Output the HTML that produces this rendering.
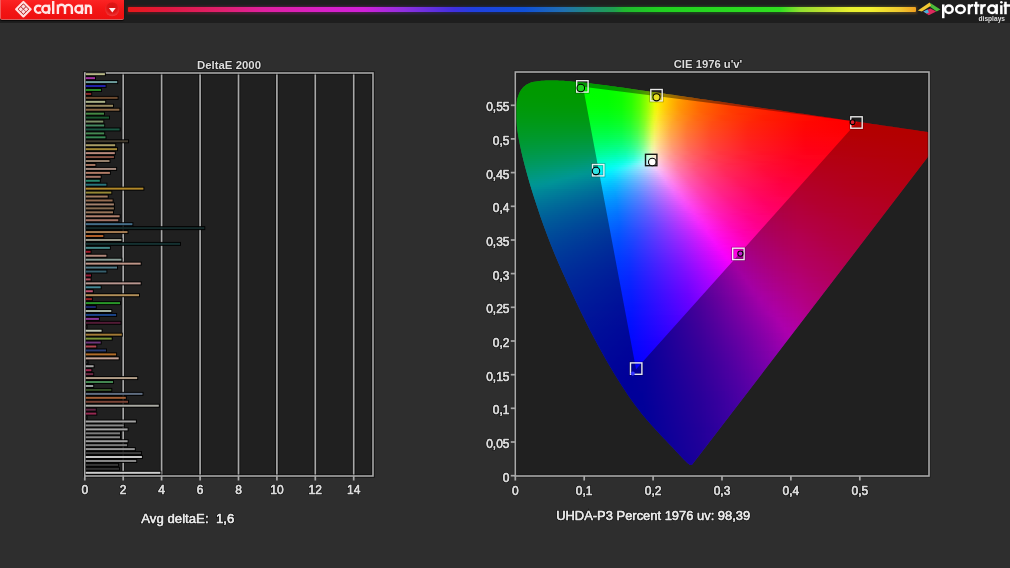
<!DOCTYPE html><html><head><meta charset="utf-8"><style>
*{margin:0;padding:0}
html,body{width:1010px;height:568px;overflow:hidden;background:#2e2e2e}
body{position:relative;font-family:"Liberation Sans",sans-serif}
#top{position:absolute;left:0;top:0;width:1010px;height:23px;background:#1e1e1e}
#rb{position:absolute;left:128px;top:7px;width:788px;height:5px;border-radius:1px;background:linear-gradient(90deg,#e81818 0,#e01840 40px,#e02070 96px,#e020a0 136px,#d820c8 196px,#d020d8 236px,#9030e0 276px,#7030e0 296px,#4030e0 326px,#2040e0 346px,#1050d8 396px,#2070b0 436px,#209070 466px,#20a050 486px,#20b830 496px,#20d020 532px,#30e020 652px,#90e030 672px,#c0e030 696px,#e8f030 722px,#f0f030 742px,#f0c830 772px,#f0a020 788px)}
#rbg{position:absolute;left:127px;top:5.5px;width:790px;height:8px;filter:blur(1.2px);opacity:.22;background:linear-gradient(90deg,#e81818 0,#e01840 40px,#e02070 96px,#e020a0 136px,#d820c8 196px,#d020d8 236px,#9030e0 276px,#7030e0 296px,#4030e0 326px,#2040e0 346px,#1050d8 396px,#2070b0 436px,#209070 466px,#20a050 486px,#20b830 496px,#20d020 532px,#30e020 652px,#90e030 672px,#c0e030 696px,#e8f030 722px,#f0f030 742px,#f0c830 772px,#f0a020 788px)}
#btn{position:absolute;left:0;top:-4px;width:123px;height:23px;border-radius:0 0 2px 2px;border-left:1px solid #f25a5a;border-bottom:1px solid #d66060;background:linear-gradient(180deg,#ff2a2a 0,#f41616 55%,#ee1010 100%);box-shadow:0 1px 1px rgba(0,0,0,.7)}
#wrap{position:absolute;left:0;top:0;width:1010px;height:568px;overflow:hidden;filter:blur(.35px)}
#logo{position:absolute;left:0;top:0;will-change:transform}
#cie{position:absolute;overflow:hidden}
#cie i{position:absolute;left:0;width:100%;display:block}
#ov{position:absolute;left:0;top:0;will-change:transform}
text{font-family:"Liberation Sans",sans-serif;fill:#dcdcdc}
.ax{font-size:12px;paint-order:stroke;stroke:#000;stroke-opacity:.5;stroke-width:2px}
.axf{font-size:12px;stroke:#dcdcdc;stroke-width:.5px}
.tt{font-size:10.5px;font-weight:bold;paint-order:stroke;stroke:#000;stroke-opacity:.45;stroke-width:1.6px}
.big{font-size:13.2px;paint-order:stroke;stroke:#000;stroke-opacity:.5;stroke-width:2px}
.bigf{font-size:13.2px;stroke:#e8e8e8;stroke-width:.45px;fill:#e8e8e8}
</style></head><body><div id="wrap">
<div id="top"></div>
<div id="rbg"></div><div id="rb"></div>
<div id="btn"></div>
<svg id="logo" width="1010" height="24" viewBox="0 0 1010 24">
  <g transform="translate(23.4 9.2)">
    <path d="M0 -7.2 L7.2 0 L0 7.2 L-7.2 0 Z" fill="none" stroke="#ffe0e0" stroke-width="2.3" stroke-linejoin="round"/>
    <path d="M0 -5.6 L5.6 0 L0 5.6 L-5.6 0 Z" fill="#a01212"/>
    <path d="M0 -4.9 L2.25 -2.65 L0 -0.4 L-2.25 -2.65 Z M2.65 -2.25 L4.9 0 L2.65 2.25 L0.4 0 Z M0 0.4 L2.25 2.65 L0 4.9 L-2.25 2.65 Z M-2.65 -2.25 L-0.4 0 L-2.65 2.25 L-4.9 0 Z" fill="#ffdce0"/>
  </g>
  <g fill="none" stroke="#ffe6e6" stroke-width="2.4">
    <path d="M41.0 6.6 A3.6 3.6 0 1 0 41.0 11.8"/>
    <circle cx="45.9" cy="9.2" r="3.55"/>
    <path d="M49.0 4.6 V14"/>
    <path d="M53.2 1 V14"/>
    <path d="M57.9 14 V4.6 M57.9 8.3 A3.55 3.55 0 0 1 65 8.3 V14 M65 8.3 A3.45 3.45 0 0 1 71.9 8.3 V14"/>
    <circle cx="78.9" cy="9.2" r="3.55"/>
    <path d="M81.9 4.6 V14"/>
    <path d="M85.9 14 V4.6 M85.9 8.4 A2.5 2.6 0 0 1 90.9 8.4 V14"/>
  </g>
  <circle cx="112.2" cy="9.2" r="7" fill="url(#cg)"/>
  <defs><radialGradient id="cg" cx=".5" cy=".4" r=".6"><stop offset="0" stop-color="#d81010"/><stop offset=".6" stop-color="#e01616"/><stop offset="1" stop-color="#f23a3a"/></radialGradient></defs>
  <path d="M108.9 8.0 L115.7 8.0 L112.3 12.4 Z" fill="#fff0f0"/>
  <g>
    <path d="M917.8 10.4 L929.6 2.6 L931.4 5.4 L929.8 6.6 L921.8 11.6 Z" fill="#f2c832"/>
    <path d="M929.6 2.6 L940.4 9.4 L936.6 11.4 L929.8 6.6 L931.4 5.4 Z" fill="#4cbc3a"/>
    <path d="M923.4 11.4 L930.4 8.4 L936.2 11.6 L928.8 15.2 Z" fill="#dc2a5c"/>
    <path d="M923.4 11.4 L927.6 9.6 L929.0 12.6 L926.4 13.5 Z" fill="#44b4dc"/>
  </g>
  <g fill="none" stroke="#ffffff" stroke-width="2.5">
    <path d="M943.25 4.4 V18.2"/>
    <ellipse cx="948.9" cy="9.2" rx="3.8" ry="3.75"/>
    <ellipse cx="960.45" cy="9.2" rx="4.3" ry="3.75"/>
    <path d="M968.95 14.2 V4.2 M968.95 8.8 A4.2 4.2 0 0 1 973.4 5.3"/>
    <path d="M976.2 1.7 V14.2 M974 5.4 H979.4"/>
    <path d="M981.45 14.2 V4.2 M981.45 8.8 A4.2 4.2 0 0 1 985.8 5.3"/>
    <ellipse cx="992.1" cy="9.2" rx="3.8" ry="3.75"/>
    <path d="M996.65 4.2 V14.2"/>
    <path d="M1001.35 5.2 V14.2"/>
    <path d="M1005.5 1.7 V14.2 M1003.6 5.4 H1010"/>
  </g>
  <circle cx="1001.35" cy="2.2" r="1.3" fill="#fff"/>
  <text x="978.5" y="20.8" font-size="6.8" font-weight="bold" fill="#d8d8d8" textLength="26.5" lengthAdjust="spacingAndGlyphs" style="font-family:'Liberation Sans',sans-serif">displays</text>
</svg>
<div id="cie" style="left:516px;top:73px;width:413px;height:403px"><i style="top:0px;height:2px;background:linear-gradient(90deg,#00ff00 0,#02ff00 91.5px,#11ff00 105.5px,#31ff00 116.5px,#60ff00 125.5px,#97ff00 132.5px,#edfa00 141.5px,#fdec00 145.5px,#ffb000 160.5px,#ff7d00 180.5px,#ff5200 207.5px,#ff2b00 248.5px,#ff0b00 312.5px,#ff0000 358.5px,#ff0000 409.5px,#ff0000 413px)"></i><i style="top:2px;height:2px;background:linear-gradient(90deg,#00ff00 0,#02ff00 91.5px,#11ff00 105.5px,#31ff00 116.5px,#60ff00 125.5px,#97ff00 132.5px,#e7fb00 140.5px,#f8f300 143.5px,#ffd500 150.5px,#ff9e00 166.5px,#ff6d00 188.5px,#ff4200 221.5px,#ff1c00 272.5px,#ff0100 344.5px,#ff0000 408.5px,#ff0000 413px)"></i><i style="top:4px;height:2px;background:linear-gradient(90deg,#00ff00 0,#02ff00 91.5px,#10ff00 105.5px,#30ff00 116.5px,#60ff00 125.5px,#98ff00 132.5px,#e8fb00 140.5px,#f9f300 143.5px,#ffd400 150.5px,#ff9d00 166.5px,#ff6c00 188.5px,#ff4100 221.5px,#ff1c00 272.5px,#ff0100 344.5px,#ff0000 408.5px,#ff0000 413px)"></i><i style="top:6px;height:2px;background:linear-gradient(90deg,#00ff00 0,#01ff00 91.5px,#10ff00 105.5px,#30ff00 116.5px,#61ff00 125.5px,#99ff00 132.5px,#e9fb00 140.5px,#fcee00 144.5px,#ffb100 159.5px,#ff8100 177.5px,#ff5400 204.5px,#ff2c00 245.5px,#ff0b00 309.5px,#ff0000 355.5px,#ff0000 413px)"></i><i style="top:8px;height:2px;background:linear-gradient(90deg,#00ff00 0,#01ff00 91.5px,#10ff00 105.5px,#2cff00 115.5px,#5aff00 124.5px,#90ff00 131.5px,#eafa00 140.5px,#fced00 144.5px,#ffb000 159.5px,#ff8000 177.5px,#ff5300 204.5px,#ff2b00 245.5px,#ff0a00 309.5px,#ff0000 355.5px,#ff0000 413px)"></i><i style="top:10px;height:2px;background:linear-gradient(90deg,#00ff00 0,#01ff00 91.5px,#10ff00 105.5px,#2cff00 115.5px,#5aff00 124.5px,#91ff00 131.5px,#ebfa00 140.5px,#fcec00 144.5px,#ffaf00 159.5px,#ff7f00 177.5px,#ff5200 204.5px,#ff2a00 245.5px,#ff0a00 309.5px,#ff0000 355.5px,#ff0000 413px)"></i><i style="top:12px;height:2px;background:linear-gradient(90deg,#00ff00 0,#01ff00 91.5px,#10ff00 105.5px,#2cff00 115.5px,#5bff00 124.5px,#92ff00 131.5px,#ecfa00 140.5px,#fdec00 144.5px,#ffae00 159.5px,#ff7e00 177.5px,#ff5100 204.5px,#ff2a00 245.5px,#ff0900 309.5px,#ff0000 355.5px,#ff0000 413px)"></i><i style="top:14px;height:2px;background:linear-gradient(90deg,#00ff01 0,#01ff00 91.5px,#0fff00 105.5px,#2cff00 115.5px,#54ff00 123.5px,#8aff00 130.5px,#edf900 140.5px,#fdeb00 144.5px,#ffad00 159.5px,#ff7d00 177.5px,#ff5000 204.5px,#ff2900 245.5px,#ff0900 309.5px,#ff0000 350.5px,#ff0000 407.5px,#ff0000 413px)"></i><i style="top:16px;height:2px;background:linear-gradient(90deg,#00ff01 0,#01ff00 91.5px,#0fff00 105.5px,#2cff00 115.5px,#55ff00 123.5px,#8aff00 130.5px,#e6fb00 139.5px,#f8f200 142.5px,#ffd300 149.5px,#ff9d00 164.5px,#ff6f00 184.5px,#ff4400 214.5px,#ff1f00 260.5px,#ff0100 332.5px,#ff0000 404.5px,#ff0000 413px)"></i><i style="top:18px;height:2px;background:linear-gradient(90deg,#00ff02 0,#01ff00 91.5px,#0fff00 105.5px,#2cff00 115.5px,#55ff00 123.5px,#8bff00 130.5px,#e7fb00 139.5px,#f9f200 142.5px,#ffd200 149.5px,#ff9c00 164.5px,#ff6e00 184.5px,#ff4300 214.5px,#ff1e00 260.5px,#ff0100 332.5px,#ff0000 404.5px,#ff0000 413px)"></i><i style="top:20px;height:2px;background:linear-gradient(90deg,#00ff03 0,#01ff00 91.5px,#0fff00 105.5px,#2cff00 115.5px,#55ff00 123.5px,#8cff00 130.5px,#e8fb00 139.5px,#f9f100 142.5px,#ffcd00 150.5px,#ff9800 165.5px,#ff6700 187.5px,#ff3f00 217.5px,#ff1c00 263.5px,#ff0000 335.5px,#ff0000 407.5px,#ff0000 413px)"></i><i style="top:22px;height:2px;background:linear-gradient(90deg,#00ff05 0,#01ff00 91.5px,#0fff00 105.5px,#2cff00 115.5px,#55ff00 123.5px,#8cff00 130.5px,#e9fa00 139.5px,#f9f000 142.5px,#ffc700 151.5px,#ff9200 167.5px,#ff6300 189.5px,#ff3900 222.5px,#ff1600 273.5px,#ff0000 337.5px,#ff0000 409.5px,#ff0000 413px)"></i><i style="top:24px;height:2px;background:linear-gradient(90deg,#00ff06 0,#01ff01 91.5px,#0eff00 105.5px,#2bff00 115.5px,#55ff00 123.5px,#8dff00 130.5px,#eafa00 139.5px,#faf000 142.5px,#ffc200 152.5px,#ff8e00 168.5px,#ff6100 190.5px,#ff3800 223.5px,#ff1500 274.5px,#ff0000 331.5px,#ff0000 413px)"></i><i style="top:26px;height:2px;background:linear-gradient(90deg,#00ff08 0,#01ff02 91.5px,#0eff01 105.5px,#2bff01 115.5px,#55ff00 123.5px,#8eff00 130.5px,#ebf900 139.5px,#faef00 142.5px,#ffbd00 153.5px,#ff8b00 169.5px,#ff5e00 191.5px,#ff3600 224.5px,#ff1400 275.5px,#ff0000 332.5px,#ff0000 404.5px,#ff0000 413px)"></i><i style="top:28px;height:2px;background:linear-gradient(90deg,#00ff0a 0,#01ff03 91.5px,#0eff02 105.5px,#2bff01 115.5px,#56ff01 123.5px,#8fff01 130.5px,#e4fb01 138.5px,#f7f201 141.5px,#ffd601 147.5px,#ffa000 161.5px,#ff6f00 181.5px,#ff4600 208.5px,#ff2200 249.5px,#ff0400 313.5px,#ff0000 377.5px,#ff0000 410.5px,#ff0000 413px)"></i><i style="top:30px;height:2px;background:linear-gradient(90deg,#00ff0c 0,#01ff05 91.5px,#0eff04 105.5px,#2bff03 115.5px,#56ff02 123.5px,#90ff02 130.5px,#e5fb02 138.5px,#f8f203 141.5px,#ffd503 147.5px,#ff9f01 161.5px,#ff6e00 181.5px,#ff4500 208.5px,#ff2100 249.5px,#ff0400 313.5px,#ff0000 404.5px,#ff0000 413px)"></i><i style="top:32px;height:2px;background:linear-gradient(90deg,#00ff0e 0,#01ff07 91.5px,#0eff06 105.5px,#2bff05 115.5px,#56ff04 123.5px,#90ff03 130.5px,#e6fb05 138.5px,#f8f106 141.5px,#ffd005 148.5px,#ff9b02 162.5px,#ff6b01 182.5px,#ff4000 212.5px,#ff1b00 258.5px,#ff0100 322.5px,#ff0000 403.5px,#ff0000 413px)"></i><i style="top:34px;height:2px;background:linear-gradient(90deg,#00ff11 0,#01ff0a 91.5px,#0eff08 105.5px,#2bff07 115.5px,#56ff06 123.5px,#91ff06 130.5px,#e7fa08 138.5px,#f9f00a 141.5px,#ffcf09 148.5px,#ff9a05 162.5px,#ff6a01 182.5px,#ff3f00 212.5px,#ff1b00 258.5px,#ff0000 322.5px,#ff0000 403.5px,#ff0000 413px)"></i><i style="top:36px;height:2px;background:linear-gradient(90deg,#00ff13 0,#01ff0d 91.5px,#0dff0b 105.5px,#2bff0a 115.5px,#57ff09 123.5px,#92ff09 130.5px,#e8fa0c 138.5px,#f9f00f 141.5px,#ffc90d 149.5px,#ff9307 164.5px,#ff6603 184.5px,#ff3c00 214.5px,#ff1900 260.5px,#ff0000 324.5px,#ff0000 405.5px,#ff0000 413px)"></i><i style="top:38px;height:2px;background:linear-gradient(90deg,#00ff16 0,#01ff10 91.5px,#0dff0f 105.5px,#2bff0e 115.5px,#57ff0d 123.5px,#93ff0c 130.5px,#e9f911 138.5px,#faef15 141.5px,#ffc412 150.5px,#ff900b 165.5px,#ff6305 185.5px,#ff3b01 215.5px,#ff1800 261.5px,#ff0100 318.5px,#ff0000 409.5px,#ff0000 413px)"></i><i style="top:40px;height:2px;background:linear-gradient(90deg,#00ff19 0,#01ff14 91.5px,#0dff12 105.5px,#2aff12 115.5px,#57ff11 123.5px,#94ff10 130.5px,#eaf916 138.5px,#faee1b 141.5px,#ffba16 152.5px,#ff870d 168.5px,#ff5a07 190.5px,#ff3202 223.5px,#ff1000 274.5px,#ff0000 325.5px,#ff0000 406.5px,#ff0000 413px)"></i><i style="top:42px;height:2px;background:linear-gradient(90deg,#00ff1c 0,#00ff18 91.5px,#0dff17 105.5px,#2aff16 115.5px,#57ff15 123.5px,#95ff15 130.5px,#e3fb1a 137.5px,#f7f220 140.5px,#ffd420 146.5px,#ff9d16 160.5px,#ff6f0d 178.5px,#ff4406 205.5px,#ff2001 246.5px,#ff0200 310.5px,#ff0000 413px)"></i><i style="top:44px;height:2px;background:linear-gradient(90deg,#00ff1f 0,#00ff1c 91.5px,#0dff1b 105.5px,#26ff1a 114.5px,#50ff1a 122.5px,#8bff19 129.5px,#e4fb20 137.5px,#f8f126 140.5px,#ffd326 146.5px,#ff9c1a 160.5px,#ff6e11 178.5px,#ff4308 205.5px,#ff1f02 246.5px,#ff0100 310.5px,#ff0000 413px)"></i><i style="top:46px;height:2px;background:linear-gradient(90deg,#00ff23 0,#00ff20 91.5px,#0cff20 105.5px,#26ff1f 114.5px,#51ff1f 122.5px,#8cff1f 129.5px,#e5fa27 137.5px,#f8f02d 140.5px,#ffcd2b 147.5px,#ff971e 161.5px,#ff6713 181.5px,#ff3f0a 208.5px,#ff1c03 249.5px,#ff0000 313.5px,#ff0000 404.5px,#ff0000 413px)"></i><i style="top:48px;height:2px;background:linear-gradient(90deg,#00ff26 0,#00ff25 91.5px,#0cff25 105.5px,#26ff25 114.5px,#51ff25 122.5px,#83ff25 128.5px,#ddfc2b 136.5px,#f4f433 139.5px,#fee036 143.5px,#ffa728 156.5px,#ff791c 172.5px,#ff4d11 196.5px,#ff2707 233.5px,#ff0701 290.5px,#ff0000 327.5px,#ff0000 408.5px,#ff0000 413px)"></i><i style="top:50px;height:2px;background:linear-gradient(90deg,#00ff2a 0,#00ff2a 91.5px,#0cff2b 105.5px,#26ff2b 114.5px,#51ff2b 122.5px,#83ff2b 128.5px,#d3fd30 135.5px,#eff738 138.5px,#fde53d 142.5px,#ffaa2e 155.5px,#ff7a20 171.5px,#ff4e14 195.5px,#ff270a 232.5px,#ff0702 289.5px,#ff0000 326.5px,#ff0000 407.5px,#ff0000 413px)"></i><i style="top:52px;height:2px;background:linear-gradient(90deg,#00ff2e 0,#00ff30 91.5px,#0cff30 105.5px,#25ff31 114.5px,#51ff31 122.5px,#84ff31 128.5px,#d5fd37 135.5px,#f0f640 138.5px,#fee445 142.5px,#ffa934 155.5px,#ff7925 171.5px,#ff4d17 195.5px,#ff260c 232.5px,#ff0703 289.5px,#ff0001 326.5px,#ff0000 407.5px,#ff0000 413px)"></i><i style="top:54px;height:2px;background:linear-gradient(90deg,#00ff32 0,#00ff36 91.5px,#0bff37 105.5px,#25ff37 114.5px,#4aff38 121.5px,#7bff38 127.5px,#d6fd3f 135.5px,#f1f547 138.5px,#fee34c 142.5px,#ffa839 155.5px,#ff7829 171.5px,#ff4c1a 195.5px,#ff250e 232.5px,#ff0605 289.5px,#ff0002 326.5px,#ff0000 407.5px,#ff0000 413px)"></i><i style="top:56px;height:2px;background:linear-gradient(90deg,#00ff36 0,#00ff3c 91.5px,#0bff3d 105.5px,#25ff3e 114.5px,#4aff3f 121.5px,#7cff40 127.5px,#d7fc47 135.5px,#f2f550 138.5px,#fee253 142.5px,#ffaa40 154.5px,#ff7a2e 170.5px,#ff4d1e 194.5px,#ff2511 231.5px,#ff0606 288.5px,#ff0003 325.5px,#ff0000 406.5px,#ff0000 413px)"></i><i style="top:58px;height:2px;background:linear-gradient(90deg,#00ff3a 0,#00ff42 91.5px,#0bff44 105.5px,#25ff46 114.5px,#4bff47 121.5px,#7cff48 127.5px,#d9fc50 135.5px,#f2f459 138.5px,#fee15b 142.5px,#ffa946 154.5px,#ff7933 170.5px,#ff4c22 194.5px,#ff2513 231.5px,#ff0508 288.5px,#ff0003 329.5px,#ff0000 410.5px,#ff0000 413px)"></i><i style="top:60px;height:2px;background:linear-gradient(90deg,#00ff3f 0,#00ff49 91.5px,#0bff4c 105.5px,#25ff4d 114.5px,#4bff4f 121.5px,#7dff50 127.5px,#dafc59 135.5px,#f3f362 138.5px,#fee063 142.5px,#ffa84c 154.5px,#ff7738 170.5px,#ff4b25 194.5px,#ff2415 231.5px,#ff0509 288.5px,#ff0004 334.5px,#ff0000 406.5px,#ff0000 413px)"></i><i style="top:62px;height:2px;background:linear-gradient(90deg,#00ff43 0,#00ff50 91.5px,#0bff53 105.5px,#25ff56 114.5px,#4bff58 121.5px,#7eff59 127.5px,#dbfc63 135.5px,#f4f36b 138.5px,#fedf6b 142.5px,#ffa752 154.5px,#ff763c 170.5px,#ff4a28 194.5px,#ff2318 231.5px,#ff040b 288.5px,#ff0004 345.5px,#ff0001 409.5px,#ff0001 413px)"></i><i style="top:64px;height:2px;background:linear-gradient(90deg,#00ff48 0,#00ff57 91.5px,#0aff5b 105.5px,#24ff5e 114.5px,#4bff61 121.5px,#7eff63 127.5px,#ddfb6d 135.5px,#f5f275 138.5px,#fede73 142.5px,#ffa659 154.5px,#ff7541 170.5px,#ff492c 194.5px,#ff231a 231.5px,#ff040d 288.5px,#ff0004 369.5px,#ff0001 410.5px,#ff0001 413px)"></i><i style="top:66px;height:2px;background:linear-gradient(90deg,#00ff4d 0,#00ff5f 91.5px,#0aff64 105.5px,#24ff67 114.5px,#4bff6a 121.5px,#7fff6d 127.5px,#defb77 135.5px,#f5f17e 138.5px,#ffd779 143.5px,#ffa15d 155.5px,#ff7245 171.5px,#ff472f 195.5px,#ff211c 232.5px,#ff030e 289.5px,#ff0002 403.5px,#ff0002 413px)"></i><i style="top:68px;height:2px;background:linear-gradient(90deg,#00ff52 0,#00ff67 91.5px,#0aff6d 105.5px,#24ff71 114.5px,#4bff74 121.5px,#80ff77 127.5px,#dffb82 135.5px,#f6f188 138.5px,#ffd681 143.5px,#ffa063 155.5px,#ff7149 171.5px,#ff4632 195.5px,#ff201f 232.5px,#ff0210 289.5px,#ff0003 403.5px,#ff0003 413px)"></i><i style="top:70px;height:2px;background:linear-gradient(90deg,#00ff57 0,#00ff70 91.5px,#0aff76 105.5px,#24ff7b 114.5px,#4bff7f 121.5px,#81ff82 127.5px,#e0fa8d 135.5px,#f6f092 138.5px,#ffd589 143.5px,#ff9f69 155.5px,#ff704e 171.5px,#ff4536 195.5px,#ff2021 232.5px,#ff0211 289.5px,#ff0004 403.5px,#ff0003 413px)"></i><i style="top:72px;height:2px;background:linear-gradient(90deg,#00ff5d 0,#00ff79 91.5px,#0aff80 105.5px,#24ff85 114.5px,#4bff8a 121.5px,#81ff8e 127.5px,#e2fa99 135.5px,#f7ef9c 138.5px,#ffd492 143.5px,#ff9e70 155.5px,#ff6f53 171.5px,#ff4439 195.5px,#ff1f24 232.5px,#ff0113 289.5px,#ff0005 403.5px,#ff0004 413px)"></i><i style="top:74px;height:2px;background:linear-gradient(90deg,#00ff62 0,#00ff7d 81.5px,#04ff88 101.5px,#18ff8e 111.5px,#38ff93 118.5px,#64ff97 124.5px,#a6ff9d 130.5px,#e3faa5 135.5px,#f8eea7 138.5px,#ffcd96 144.5px,#ff9974 156.5px,#ff6b57 172.5px,#ff423c 196.5px,#ff1d26 233.5px,#ff0115 290.5px,#ff0006 404.5px,#ff0005 413px)"></i><i style="top:76px;height:2px;background:linear-gradient(90deg,#00ff68 0,#00ff86 81.5px,#04ff92 101.5px,#18ff99 111.5px,#38ff9f 118.5px,#65ffa4 124.5px,#a7ffaa 130.5px,#e4f9b1 135.5px,#f8edb2 138.5px,#ffcc9f 144.5px,#ff987a 156.5px,#ff6a5c 172.5px,#ff4140 196.5px,#ff1d28 233.5px,#ff0016 290.5px,#ff0007 404.5px,#ff0006 413px)"></i><i style="top:78px;height:2px;background:linear-gradient(90deg,#00ff6e 0,#00ff8a 72.5px,#02ff9b 99.5px,#12ffa3 109.5px,#32ffaa 117.5px,#5cffb0 123.5px,#9bffb6 129.5px,#e5f9be 135.5px,#f9ecbc 138.5px,#ffc5a3 145.5px,#ff907c 158.5px,#ff615b 176.5px,#ff373e 203.5px,#ff1526 244.5px,#ff0018 290.5px,#ff0008 404.5px,#ff0007 413px)"></i><i style="top:80px;height:2px;background:linear-gradient(90deg,#00ff74 0,#00ff93 72.5px,#02ffa6 99.5px,#11ffaf 109.5px,#32ffb7 117.5px,#5cffbd 123.5px,#90ffc3 128.5px,#e6f8cb 135.5px,#f9ebc7 138.5px,#ffbfa8 146.5px,#ff8b80 159.5px,#ff5e5e 177.5px,#ff3540 204.5px,#ff1328 245.5px,#ff0019 291.5px,#ff0009 405.5px,#ff0008 413px)"></i><i style="top:82px;height:2px;background:linear-gradient(90deg,#00ff7b 0,#00ff9d 72.5px,#02ffb2 99.5px,#11ffbb 109.5px,#32ffc4 117.5px,#5effcb 123.5px,#9fffd3 129.5px,#defad8 134.5px,#f6efd5 137.5px,#ffd3c1 142.5px,#ff9f97 153.5px,#ff6e70 169.5px,#ff4550 191.5px,#ff2135 224.5px,#ff0420 275.5px,#ff000f 356.5px,#ff0009 407.5px,#ff0009 413px)"></i><i style="top:84px;height:2px;background:linear-gradient(90deg,#00ff81 0,#00ffa1 64.5px,#03ffc0 101.5px,#14ffc9 110.5px,#34ffd2 117.5px,#61ffd9 123.5px,#a3fee1 129.5px,#e0f9e5 134.5px,#f6eee0 137.5px,#ffd2cb 142.5px,#ff9e9e 153.5px,#ff6d76 169.5px,#ff4454 191.5px,#ff2038 224.5px,#ff0321 275.5px,#ff000c 389.5px,#ff000a 411.5px,#ff000a 413px)"></i><i style="top:86px;height:2px;background:linear-gradient(90deg,#00ff88 0,#00ffab 64.5px,#04ffcc 101.5px,#16ffd7 110.5px,#39fedf 117.5px,#69fde7 123.5px,#e2f6ef 134.5px,#f6ebea 137.5px,#ffcbcf 143.5px,#ff959f 155.5px,#ff6777 171.5px,#ff3d54 195.5px,#ff1a36 232.5px,#ff0021 283.5px,#ff000d 397.5px,#ff000b 413px)"></i><i style="top:88px;height:2px;background:linear-gradient(90deg,#00ff8f 0,#00ffb5 64.5px,#01ffd4 97.5px,#0efedf 106.5px,#2afde7 113.5px,#5bfcef 120.5px,#e3f1f7 134.5px,#f8e3ef 138.5px,#ffbac9 146.5px,#ff869a 159.5px,#ff5971 177.5px,#ff324e 204.5px,#ff1032 245.5px,#ff0022 286.5px,#ff000d 400.5px,#ff000c 413px)"></i><i style="top:90px;height:2px;background:linear-gradient(90deg,#00ff96 0,#00ffb9 57.5px,#03fee2 98.5px,#15fdeb 106.5px,#38fbf2 113.5px,#85f5f9 123.5px,#e0e9fc 134.5px,#f8dbf2 139.5px,#ffafc9 148.5px,#ff7c98 162.5px,#ff4f6e 182.5px,#ff284a 212.5px,#ff092e 258.5px,#ff0022 291.5px,#ff000e 405.5px,#ff000d 413px)"></i><i style="top:92px;height:2px;background:linear-gradient(90deg,#00ff9d 0,#00ffc3 57.5px,#01fee9 94.5px,#10fbf1 102.5px,#34f8f7 110.5px,#dbe0fe 134.5px,#f7d2f4 140.5px,#ffaed1 148.5px,#ff7ea1 161.5px,#ff5377 179.5px,#ff2e53 206.5px,#ff0e36 247.5px,#ff0026 284.5px,#ff0010 398.5px,#ff000e 413px)"></i><i style="top:94px;height:2px;background:linear-gradient(90deg,#00ffa5 0,#00ffce 57.5px,#02fbf3 94.5px,#14f8f8 101.5px,#46f0fc 111.5px,#ead1fc 138.5px,#fcbeec 144.5px,#ff83ae 159.5px,#ff5680 177.5px,#ff2f59 204.5px,#ff0e39 245.5px,#ff0029 282.5px,#ff0013 384.5px,#ff000f 411.5px,#ff000f 413px)"></i><i style="top:96px;height:2px;background:linear-gradient(90deg,#00ffac 0,#00ffd8 57.5px,#00f9f7 90.5px,#0af4fb 97.5px,#35ecfe 107.5px,#ecc5fc 140.5px,#fdb3ea 146.5px,#ff7bae 161.5px,#ff5181 179.5px,#ff2c5a 206.5px,#ff0c3a 247.5px,#ff002b 280.5px,#ff0014 382.5px,#ff0010 413px)"></i><i style="top:98px;height:2px;background:linear-gradient(90deg,#00ffb4 0,#00ffe3 57.5px,#00f5fb 87.5px,#06effd 95.5px,#28e6ff 104.5px,#c5c5ff 134.5px,#f2b8f9 143.5px,#fea1e0 150.5px,#ff72ab 164.5px,#ff4b81 182.5px,#ff285b 209.5px,#ff0a3b 250.5px,#ff002c 283.5px,#ff0015 385.5px,#ff0011 413px)"></i><i style="top:100px;height:2px;background:linear-gradient(90deg,#00ffbc 0,#00fcf3 64.5px,#03e8ff 94.5px,#1ee0ff 102.5px,#a3c3ff 129.5px,#f0b0fb 144.5px,#fd9fe8 150.5px,#ff6eaf 165.5px,#ff4883 183.5px,#ff265d 210.5px,#ff093d 251.5px,#ff002f 281.5px,#ff0016 383.5px,#ff0012 410.5px,#ff0012 413px)"></i><i style="top:102px;height:2px;background:linear-gradient(90deg,#00ffc5 0,#00fbf5 57.5px,#00e3ff 90.5px,#0addff 97.5px,#58caff 115.5px,#eea8fc 145.5px,#fd99eb 151.5px,#ff6ab2 166.5px,#ff4586 184.5px,#ff245f 211.5px,#ff083f 252.5px,#ff0031 282.5px,#ff0017 384.5px,#ff0013 411.5px,#ff0013 413px)"></i><i style="top:104px;height:2px;background:linear-gradient(90deg,#00ffcd 0,#00faf8 51.5px,#01daff 92.5px,#0fd3ff 99.5px,#7abaff 123.5px,#f09efb 147.5px,#fe8de6 154.5px,#ff61af 169.5px,#ff3d82 189.5px,#ff1c5a 219.5px,#ff013a 265.5px,#ff001f 346.5px,#ff0015 410.5px,#ff0014 413px)"></i><i style="top:106px;height:2px;background:linear-gradient(90deg,#00ffd6 0,#00faf8 41.5px,#00dbff 82.5px,#04cfff 95.5px,#21c6ff 104.5px,#9babff 131.5px,#f296fb 149.5px,#fe84e4 156.5px,#ff5caf 171.5px,#ff3983 191.5px,#ff1a5c 221.5px,#ff003b 267.5px,#ff0020 348.5px,#ff0015 413px)"></i><i style="top:108px;height:2px;background:linear-gradient(90deg,#00ffdf 0,#00f8fb 37.5px,#02c9ff 94.5px,#18c1ff 102.5px,#8da6ff 129.5px,#ed90fd 149.5px,#fd82eb 156.5px,#ff58b2 172.5px,#ff3785 192.5px,#ff185e 222.5px,#ff003d 268.5px,#ff0022 349.5px,#ff0017 406.5px,#ff0016 413px)"></i><i style="top:110px;height:2px;background:linear-gradient(90deg,#00ffe8 0,#00f5fd 33.5px,#00c6ff 90.5px,#09beff 98.5px,#60a9ff 120.5px,#eb8afd 150.5px,#fd7dee 157.5px,#ff55b5 173.5px,#ff3488 193.5px,#ff1760 223.5px,#ff0042 264.5px,#ff0026 336.5px,#ff0018 408.5px,#ff0017 413px)"></i><i style="top:112px;height:2px;background:linear-gradient(90deg,#00fef0 0,#00f1fe 30.5px,#01bcff 94.5px,#11b5ff 101.5px,#7f9bff 128.5px,#ed82fd 152.5px,#fd76ed 159.5px,#ff50b5 175.5px,#ff3189 195.5px,#ff1461 225.5px,#ff0043 266.5px,#ff0027 338.5px,#ff0019 410.5px,#ff0019 413px)"></i><i style="top:114px;height:2px;background:linear-gradient(90deg,#00fcf7 0,#00e6ff 37.5px,#01b5ff 94.5px,#10afff 101.5px,#7b95ff 128.5px,#f27afb 155.5px,#fe6ce8 162.5px,#ff49b3 178.5px,#ff2a85 200.5px,#ff0e5d 233.5px,#ff0045 266.5px,#ff0029 338.5px,#ff001a 410.5px,#ff001a 413px)"></i><i style="top:116px;height:2px;background:linear-gradient(90deg,#00f8fc 0,#00bbff 81.5px,#04adff 97.5px,#33a0ff 111.5px,#bc80ff 144.5px,#f473fb 157.5px,#ff63e3 165.5px,#ff43b0 181.5px,#ff2684 203.5px,#ff0b5d 236.5px,#ff0047 266.5px,#ff002a 338.5px,#ff001b 410.5px,#ff001b 413px)"></i><i style="top:118px;height:2px;background:linear-gradient(90deg,#00f3fe 0,#00acff 91.5px,#08a5ff 99.5px,#5f8fff 123.5px,#eb6ffe 156.5px,#fd66f0 163.5px,#ff41b5 181.5px,#ff2588 203.5px,#ff0b60 236.5px,#ff004a 266.5px,#ff002c 338.5px,#ff001c 410.5px,#ff001c 413px)"></i><i style="top:120px;height:2px;background:linear-gradient(90deg,#00eeff 0,#00a7ff 91.5px,#07a0ff 99.5px,#548cff 121.5px,#ed69fd 158.5px,#fd5fef 165.5px,#ff3db5 183.5px,#ff2289 205.5px,#ff0961 238.5px,#ff004c 265.5px,#ff002d 337.5px,#ff001d 409.5px,#ff001d 413px)"></i><i style="top:122px;height:2px;background:linear-gradient(90deg,#00e8ff 0,#00a2ff 91.5px,#079bff 99.5px,#5187ff 121.5px,#e765fe 158.5px,#fb5df4 165.5px,#ff39b5 185.5px,#ff1f89 207.5px,#ff0762 240.5px,#ff004e 267.5px,#ff002e 339.5px,#ff001e 411.5px,#ff001e 413px)"></i><i style="top:124px;height:2px;background:linear-gradient(90deg,#00e2ff 0,#009dff 91.5px,#0895ff 100.5px,#657dff 127.5px,#e95ffe 160.5px,#fc57f3 167.5px,#ff35b6 187.5px,#ff1a87 211.5px,#ff0461 244.5px,#ff0041 295.5px,#ff0024 386.5px,#ff0020 410.5px,#ff001f 413px)"></i><i style="top:126px;height:2px;background:linear-gradient(90deg,#00dcff 0,#0098ff 91.5px,#0790ff 100.5px,#577cff 124.5px,#e85afe 161.5px,#fb53f5 168.5px,#ff32b8 188.5px,#ff1889 212.5px,#ff0363 245.5px,#ff0042 296.5px,#ff0025 387.5px,#ff0020 411.5px,#ff0020 413px)"></i><i style="top:128px;height:2px;background:linear-gradient(90deg,#00d7ff 0,#0093ff 91.5px,#078cff 100.5px,#5478ff 124.5px,#f153fd 165.5px,#fe4bee 172.5px,#ff2fb8 190.5px,#ff168a 214.5px,#ff0164 247.5px,#ff0043 298.5px,#ff0026 389.5px,#ff0022 411.5px,#ff0021 413px)"></i><i style="top:130px;height:2px;background:linear-gradient(90deg,#00d1ff 0,#008fff 91.5px,#0688ff 100.5px,#5174ff 124.5px,#eb50fe 165.5px,#fc49f3 172.5px,#ff2bb8 192.5px,#ff138b 216.5px,#ff0065 249.5px,#ff0044 300.5px,#ff0027 391.5px,#ff0023 411.5px,#ff0023 413px)"></i><i style="top:132px;height:2px;background:linear-gradient(90deg,#00ccff 0,#008bff 91.5px,#0783ff 101.5px,#5d6cff 128.5px,#f449fc 169.5px,#ff40e9 177.5px,#ff26b6 195.5px,#ff108a 219.5px,#ff0065 252.5px,#ff0042 309.5px,#ff0026 400.5px,#ff0024 413px)"></i><i style="top:134px;height:2px;background:linear-gradient(90deg,#00c7ff 0,#0086ff 91.5px,#077fff 101.5px,#5a69ff 128.5px,#ef46fe 169.5px,#fe3eee 177.5px,#ff23b6 197.5px,#ff0e8b 221.5px,#ff0069 251.5px,#ff0047 302.5px,#ff0029 393.5px,#ff0025 411.5px,#ff0025 413px)"></i><i style="top:136px;height:2px;background:linear-gradient(90deg,#00c3ff 0,#0082ff 91.5px,#067bff 101.5px,#5765ff 128.5px,#ea43fe 169.5px,#fd3cf3 177.5px,#ff20b6 199.5px,#ff0987 226.5px,#ff0069 253.5px,#ff0048 304.5px,#ff002a 395.5px,#ff0026 411.5px,#ff0026 413px)"></i><i style="top:138px;height:2px;background:linear-gradient(90deg,#00beff 0,#007fff 91.5px,#0577ff 101.5px,#5562ff 128.5px,#f53cfc 174.5px,#ff34e9 182.5px,#ff1cb4 202.5px,#ff0786 229.5px,#ff0069 256.5px,#ff0045 313.5px,#ff0029 404.5px,#ff0027 413px)"></i><i style="top:140px;height:2px;background:linear-gradient(90deg,#00baff 0,#007bff 91.5px,#0573ff 101.5px,#4961ff 125.5px,#d440ff 166.5px,#fa36f8 178.5px,#ff23cb 194.5px,#ff0d9a 218.5px,#ff0077 245.5px,#ff0053 291.5px,#ff0034 363.5px,#ff0029 409.5px,#ff0028 413px)"></i><i style="top:142px;height:2px;background:linear-gradient(90deg,#00b5ff 0,#0077ff 91.5px,#066fff 102.5px,#5d58ff 132.5px,#e837ff 173.5px,#fc31f6 181.5px,#ff19ba 203.5px,#ff048c 230.5px,#ff0065 267.5px,#ff0044 324.5px,#ff002b 405.5px,#ff0029 413px)"></i><i style="top:144px;height:2px;background:linear-gradient(90deg,#00b1ff 0,#0074ff 91.5px,#066cff 102.5px,#5a55ff 132.5px,#f331fd 178.5px,#fe2aec 186.5px,#ff15b8 206.5px,#ff028b 233.5px,#ff0062 274.5px,#ff0040 338.5px,#ff002b 410.5px,#ff002b 413px)"></i><i style="top:146px;height:2px;background:linear-gradient(90deg,#00adff 0,#0071ff 91.5px,#0569ff 102.5px,#5853ff 132.5px,#ef2ffe 178.5px,#fe29f1 186.5px,#ff12b8 208.5px,#ff018b 235.5px,#ff0063 276.5px,#ff0041 340.5px,#ff002c 413px)"></i><i style="top:148px;height:2px;background:linear-gradient(90deg,#00a9ff 0,#006eff 91.5px,#0665ff 103.5px,#624dff 136.5px,#f62afc 182.5px,#ff22e8 191.5px,#ff0db2 213.5px,#ff0088 240.5px,#ff0062 281.5px,#ff0040 345.5px,#ff002e 409.5px,#ff002d 413px)"></i><i style="top:150px;height:2px;background:linear-gradient(90deg,#00a5ff 0,#006aff 91.5px,#0662ff 103.5px,#5f4aff 136.5px,#f227fe 182.5px,#fe22ef 190.5px,#ff0db8 212.5px,#ff008d 239.5px,#ff0065 280.5px,#ff0042 344.5px,#ff002f 408.5px,#ff002e 413px)"></i><i style="top:152px;height:2px;background:linear-gradient(90deg,#00a2ff 0,#0068ff 91.5px,#055fff 103.5px,#5d48ff 136.5px,#ed25fe 182.5px,#fd20f4 190.5px,#ff0ab8 214.5px,#ff0091 238.5px,#ff0068 279.5px,#ff0044 343.5px,#ff0031 407.5px,#ff002f 413px)"></i><i style="top:154px;height:2px;background:linear-gradient(90deg,#009eff 0,#0065ff 91.5px,#055cff 103.5px,#5247ff 133.5px,#ef22fe 184.5px,#fe1df3 192.5px,#ff08b8 216.5px,#ff0091 240.5px,#ff0068 281.5px,#ff0045 345.5px,#ff0031 409.5px,#ff0031 413px)"></i><i style="top:156px;height:2px;background:linear-gradient(90deg,#009bff 0,#035aff 102.5px,#374bff 124.5px,#be2aff 170.5px,#fa1cfa 190.5px,#ff10d4 205.5px,#ff00a5 229.5px,#ff007b 262.5px,#ff0056 313.5px,#ff0036 394.5px,#ff0032 413px)"></i><i style="top:158px;height:2px;background:linear-gradient(90deg,#0097ff 0,#0358ff 102.5px,#3649ff 124.5px,#ba28ff 170.5px,#f71afc 190.5px,#ff13e6 200.5px,#ff02b4 222.5px,#ff0085 255.5px,#ff005f 301.5px,#ff003e 373.5px,#ff0033 410.5px,#ff0033 413px)"></i><i style="top:160px;height:2px;background:linear-gradient(90deg,#0094ff 0,#0255ff 102.5px,#2f48ff 122.5px,#b028ff 168.5px,#f817fc 192.5px,#ff0fe3 203.5px,#ff00af 227.5px,#ff0083 260.5px,#ff005b 311.5px,#ff0039 392.5px,#ff0034 413px)"></i><i style="top:162px;height:2px;background:linear-gradient(90deg,#0091ff 0,#0253ff 102.5px,#2947ff 120.5px,#a628ff 166.5px,#f615fd 193.5px,#ff0ee7 203.5px,#ff00b3 227.5px,#ff0085 260.5px,#ff005d 311.5px,#ff003b 392.5px,#ff0035 413px)"></i><i style="top:164px;height:2px;background:linear-gradient(90deg,#008eff 0,#0250ff 102.5px,#2346ff 118.5px,#ac24ff 169.5px,#f912fb 196.5px,#ff07da 210.5px,#ff00ae 232.5px,#ff0083 265.5px,#ff005c 316.5px,#ff003b 397.5px,#ff0037 413px)"></i><i style="top:166px;height:2px;background:linear-gradient(90deg,#008bff 0,#024eff 102.5px,#2144ff 118.5px,#a822ff 169.5px,#f610fd 196.5px,#ff09e8 206.5px,#ff00b8 228.5px,#ff008a 261.5px,#ff0063 307.5px,#ff0042 379.5px,#ff0038 413px)"></i><i style="top:168px;height:2px;background:linear-gradient(90deg,#0088ff 0,#014cff 102.5px,#1e42ff 117.5px,#a221ff 168.5px,#f70dfd 198.5px,#ff06e5 209.5px,#ff00b3 233.5px,#ff0087 266.5px,#ff005f 317.5px,#ff003d 398.5px,#ff0039 413px)"></i><i style="top:170px;height:2px;background:linear-gradient(90deg,#0085ff 0,#014aff 102.5px,#1b41ff 116.5px,#9c20ff 167.5px,#f80bfc 200.5px,#ff03e2 212.5px,#ff00b1 236.5px,#ff0086 269.5px,#ff005f 320.5px,#ff003d 401.5px,#ff003a 413px)"></i><i style="top:172px;height:2px;background:linear-gradient(90deg,#0082ff 0,#0148ff 102.5px,#1740ff 115.5px,#971fff 166.5px,#f30afe 199.5px,#ff05f0 208.5px,#ff00bb 232.5px,#ff008d 265.5px,#ff0066 311.5px,#ff0044 383.5px,#ff003c 410.5px,#ff003b 413px)"></i><i style="top:174px;height:2px;background:linear-gradient(90deg,#0080ff 0,#0146ff 102.5px,#173eff 115.5px,#941eff 166.5px,#f807fc 203.5px,#ff01e3 215.5px,#ff00b3 239.5px,#ff0084 276.5px,#ff005f 327.5px,#ff003e 408.5px,#ff003d 413px)"></i><i style="top:176px;height:2px;background:linear-gradient(90deg,#007dff 0,#0144ff 102.5px,#143cff 114.5px,#8e1dff 165.5px,#f306fe 202.5px,#fe01f1 211.5px,#ff00bd 235.5px,#ff008f 268.5px,#ff0065 319.5px,#ff0044 391.5px,#ff003e 411.5px,#ff003e 413px)"></i><i style="top:178px;height:2px;background:linear-gradient(90deg,#007aff 0,#0142ff 102.5px,#133bff 114.5px,#8c1cff 165.5px,#f803fd 206.5px,#ff00e4 218.5px,#ff00b0 245.5px,#ff0084 282.5px,#ff005c 339.5px,#ff003f 411.5px,#ff003f 413px)"></i><i style="top:180px;height:2px;background:linear-gradient(90deg,#0078ff 0,#0140ff 102.5px,#1239ff 114.5px,#891aff 165.5px,#f502fe 206.5px,#ff00ed 216.5px,#ff00bb 240.5px,#ff008f 273.5px,#ff0066 324.5px,#ff0042 405.5px,#ff0040 413px)"></i><i style="top:182px;height:2px;background:linear-gradient(90deg,#0076ff 0,#003eff 102.5px,#0f38ff 113.5px,#8419ff 164.5px,#fa00fc 210.5px,#ff00dc 225.5px,#ff00ac 252.5px,#ff007e 293.5px,#ff0059 350.5px,#ff0043 407.5px,#ff0042 413px)"></i><i style="top:184px;height:2px;background:linear-gradient(90deg,#0073ff 0,#003cff 102.5px,#0e36ff 113.5px,#8118ff 164.5px,#f700fd 210.5px,#ff00e9 221.5px,#ff00b5 248.5px,#ff0088 285.5px,#ff005f 342.5px,#ff0045 406.5px,#ff0043 413px)"></i><i style="top:186px;height:2px;background:linear-gradient(90deg,#0071ff 0,#003bff 102.5px,#0e34ff 113.5px,#7f17ff 164.5px,#f300fe 210.5px,#ff00ef 220.5px,#ff00ba 247.5px,#ff008b 284.5px,#ff0065 335.5px,#ff0046 407.5px,#ff0044 413px)"></i><i style="top:188px;height:2px;background:linear-gradient(90deg,#006fff 0,#0039ff 102.5px,#0d33ff 113.5px,#7d16ff 164.5px,#e300ff 205.5px,#fd00f9 217.5px,#ff00bd 247.5px,#ff008e 284.5px,#ff0067 335.5px,#ff0047 407.5px,#ff0045 413px)"></i><i style="top:190px;height:2px;background:linear-gradient(90deg,#006cff 0,#0037ff 102.5px,#0c31ff 113.5px,#7a14ff 164.5px,#df00ff 205.5px,#fc00fa 218.5px,#ff00b9 251.5px,#ff008c 288.5px,#ff0063 345.5px,#ff0048 409.5px,#ff0047 413px)"></i><i style="top:192px;height:2px;background:linear-gradient(90deg,#006aff 0,#0036ff 102.5px,#0c30ff 113.5px,#7813ff 164.5px,#dc00ff 205.5px,#fc00f9 220.5px,#ff00be 250.5px,#ff008f 287.5px,#ff0068 338.5px,#ff0049 410.5px,#ff0048 413px)"></i><i style="top:194px;height:2px;background:linear-gradient(90deg,#0068ff 0,#0034ff 102.5px,#0b2eff 113.5px,#7612ff 164.5px,#d800ff 205.5px,#fc00fa 221.5px,#ff00bb 254.5px,#ff008e 291.5px,#ff0064 348.5px,#ff0049 413px)"></i><i style="top:196px;height:2px;background:linear-gradient(90deg,#0066ff 0,#0032ff 102.5px,#0b2dff 113.5px,#7411ff 164.5px,#cb00ff 201.5px,#fa00fc 221.5px,#ff00dc 237.5px,#ff00ab 267.5px,#ff0081 308.5px,#ff005a 372.5px,#ff004b 409.5px,#ff004a 413px)"></i><i style="top:198px;height:2px;background:linear-gradient(90deg,#0064ff 0,#0031ff 102.5px,#0a2bff 113.5px,#7f0dff 170.5px,#cc00ff 203.5px,#fa00fc 223.5px,#ff00d0 245.5px,#ff00a0 278.5px,#ff0077 324.5px,#ff0051 396.5px,#ff004c 413px)"></i><i style="top:200px;height:2px;background:linear-gradient(90deg,#0062ff 0,#0030ff 102.5px,#0a2aff 113.5px,#7d0cff 170.5px,#c900ff 203.5px,#fb00fb 225.5px,#ff00be 258.5px,#ff0091 295.5px,#ff0067 352.5px,#ff004e 409.5px,#ff004d 413px)"></i><i style="top:202px;height:2px;background:linear-gradient(90deg,#0060ff 0,#002eff 102.5px,#0928ff 113.5px,#7b0bff 170.5px,#bf00ff 200.5px,#fc00fb 227.5px,#ff00be 260.5px,#ff0091 297.5px,#ff0068 354.5px,#ff004f 411.5px,#ff004e 413px)"></i><i style="top:204px;height:2px;background:linear-gradient(90deg,#005eff 0,#002dff 102.5px,#0827ff 113.5px,#790aff 170.5px,#bc00ff 200.5px,#fa00fd 227.5px,#ff00de 243.5px,#ff00ab 276.5px,#ff007e 322.5px,#ff005a 386.5px,#ff0050 410.5px,#ff0050 413px)"></i><i style="top:206px;height:2px;background:linear-gradient(90deg,#005cff 0,#002bff 102.5px,#0826ff 113.5px,#7709ff 170.5px,#b900ff 200.5px,#fc00fb 230.5px,#ff00bf 263.5px,#ff008f 304.5px,#ff0067 361.5px,#ff0051 413px)"></i><i style="top:208px;height:2px;background:linear-gradient(90deg,#005bff 0,#002aff 102.5px,#0924ff 114.5px,#7708ff 171.5px,#b900ff 201.5px,#fb00fc 231.5px,#ff00ca 258.5px,#ff009a 295.5px,#ff0072 346.5px,#ff0053 410.5px,#ff0052 413px)"></i><i style="top:210px;height:2px;background:linear-gradient(90deg,#0059ff 0,#0029ff 102.5px,#0923ff 114.5px,#7507ff 171.5px,#b600ff 201.5px,#f900fd 231.5px,#ff00e7 244.5px,#ff00b5 274.5px,#ff008a 315.5px,#ff0061 379.5px,#ff0053 413px)"></i><i style="top:212px;height:2px;background:linear-gradient(90deg,#0057ff 0,#0028ff 102.5px,#0822ff 114.5px,#7306ff 171.5px,#ba00ff 204.5px,#fb00fc 234.5px,#ff00d0 258.5px,#ff009f 295.5px,#ff0075 346.5px,#ff0055 410.5px,#ff0055 413px)"></i><i style="top:214px;height:2px;background:linear-gradient(90deg,#0055ff 0,#0026ff 102.5px,#0821ff 114.5px,#7205ff 171.5px,#c000ff 208.5px,#fa00fd 235.5px,#ff00dc 253.5px,#ff00ab 286.5px,#ff0080 332.5px,#ff0059 404.5px,#ff0056 413px)"></i><i style="top:216px;height:2px;background:linear-gradient(90deg,#0054ff 0,#0025ff 102.5px,#071fff 114.5px,#7004ff 171.5px,#d000ff 217.5px,#fb00fc 237.5px,#ff00d1 261.5px,#ff00a0 298.5px,#ff0077 349.5px,#ff005a 406.5px,#ff0057 413px)"></i><i style="top:218px;height:2px;background:linear-gradient(90deg,#0052ff 0,#0024ff 102.5px,#071eff 114.5px,#6e04ff 171.5px,#f500fe 235.5px,#ff00f0 246.5px,#ff00bd 276.5px,#ff0090 317.5px,#ff0066 381.5px,#ff0059 411.5px,#ff0059 413px)"></i><i style="top:220px;height:2px;background:linear-gradient(90deg,#0051ff 0,#0023ff 102.5px,#081dff 115.5px,#6e02ff 172.5px,#f400ff 236.5px,#ff00f2 247.5px,#ff00bf 277.5px,#ff0092 318.5px,#ff0067 382.5px,#ff005a 413px)"></i><i style="top:222px;height:2px;background:linear-gradient(90deg,#004fff 0,#0022ff 102.5px,#071cff 115.5px,#6c02ff 172.5px,#f000ff 236.5px,#fe00f5 247.5px,#ff00bd 280.5px,#ff0091 321.5px,#ff0067 385.5px,#ff005b 413px)"></i><i style="top:224px;height:2px;background:linear-gradient(90deg,#004eff 0,#0021ff 102.5px,#071bff 115.5px,#6b01ff 172.5px,#fc00fc 244.5px,#ff00bf 281.5px,#ff0092 322.5px,#ff0068 386.5px,#ff005d 410.5px,#ff005d 413px)"></i><i style="top:226px;height:2px;background:linear-gradient(90deg,#004cff 0,#0020ff 102.5px,#061aff 115.5px,#6901ff 172.5px,#fa00fd 244.5px,#ff00e2 260.5px,#ff00b2 293.5px,#ff0086 339.5px,#ff005e 411.5px,#ff005e 413px)"></i><i style="top:228px;height:2px;background:linear-gradient(90deg,#004bff 0,#001fff 102.5px,#0619ff 115.5px,#6801ff 172.5px,#f700fe 244.5px,#ff00ed 256.5px,#ff00b9 289.5px,#ff008b 335.5px,#ff0065 399.5px,#ff005f 413px)"></i><i style="top:230px;height:2px;background:linear-gradient(90deg,#0049ff 0,#001dff 102.5px,#0717ff 116.5px,#6800ff 173.5px,#f600fe 245.5px,#ff00ee 257.5px,#ff00ba 290.5px,#ff008d 336.5px,#ff0066 400.5px,#ff0061 413px)"></i><i style="top:232px;height:2px;background:linear-gradient(90deg,#0048ff 0,#001cff 102.5px,#0616ff 116.5px,#6600ff 173.5px,#f300ff 245.5px,#ff00f3 256.5px,#ff00be 289.5px,#ff008f 335.5px,#ff0068 399.5px,#ff0062 413px)"></i><i style="top:234px;height:2px;background:linear-gradient(90deg,#0046ff 0,#001bff 102.5px,#0615ff 116.5px,#6500ff 173.5px,#f000ff 245.5px,#fe00f6 256.5px,#ff00c1 289.5px,#ff0091 335.5px,#ff0069 399.5px,#ff0063 413px)"></i><i style="top:236px;height:2px;background:linear-gradient(90deg,#0045ff 0,#001bff 102.5px,#0615ff 116.5px,#6300ff 173.5px,#ed00ff 245.5px,#fe00f7 257.5px,#ff00c2 290.5px,#ff0092 336.5px,#ff006a 400.5px,#ff0065 413px)"></i><i style="top:238px;height:2px;background:linear-gradient(90deg,#0044ff 0,#0315ff 114.5px,#5e00ff 171.5px,#f800fe 252.5px,#ff00ec 265.5px,#ff00ba 298.5px,#ff008e 344.5px,#ff0068 408.5px,#ff0066 413px)"></i><i style="top:240px;height:2px;background:linear-gradient(90deg,#0042ff 0,#0314ff 114.5px,#5d00ff 171.5px,#f500ff 252.5px,#ff00f3 263.5px,#ff00bf 296.5px,#ff0091 342.5px,#ff006a 406.5px,#ff0067 413px)"></i><i style="top:242px;height:2px;background:linear-gradient(90deg,#0041ff 0,#0313ff 114.5px,#5100ff 165.5px,#f900fe 256.5px,#ff00e7 271.5px,#ff00b3 308.5px,#ff0086 359.5px,#ff006a 410.5px,#ff0069 413px)"></i><i style="top:244px;height:2px;background:linear-gradient(90deg,#0040ff 0,#0212ff 114.5px,#5000ff 165.5px,#e300ff 246.5px,#fe00fa 262.5px,#ff00c0 299.5px,#ff0093 345.5px,#ff006c 409.5px,#ff006a 413px)"></i><i style="top:246px;height:2px;background:linear-gradient(90deg,#003fff 0,#0211ff 114.5px,#4f00ff 165.5px,#e100ff 246.5px,#fc00fb 262.5px,#ff00be 303.5px,#ff0091 349.5px,#ff006e 406.5px,#ff006b 413px)"></i><i style="top:248px;height:2px;background:linear-gradient(90deg,#003dff 0,#0210ff 114.5px,#4e00ff 165.5px,#de00ff 246.5px,#fd00fb 264.5px,#ff00be 305.5px,#ff008e 356.5px,#ff006f 407.5px,#ff006d 413px)"></i><i style="top:250px;height:2px;background:linear-gradient(90deg,#003cff 0,#0210ff 114.5px,#4c00ff 165.5px,#db00ff 246.5px,#fd00fb 266.5px,#ff00be 307.5px,#ff008e 358.5px,#ff0070 409.5px,#ff006e 413px)"></i><i style="top:252px;height:2px;background:linear-gradient(90deg,#003bff 0,#010fff 114.5px,#4300ff 160.5px,#cf00ff 241.5px,#fb00fd 265.5px,#ff00d4 292.5px,#ff00a5 333.5px,#ff007b 390.5px,#ff0070 413px)"></i><i style="top:254px;height:2px;background:linear-gradient(90deg,#003aff 0,#010eff 114.5px,#4200ff 160.5px,#cd00ff 241.5px,#fc00fc 268.5px,#ff00c0 309.5px,#ff0090 360.5px,#ff0071 411.5px,#ff0071 413px)"></i><i style="top:256px;height:2px;background:linear-gradient(90deg,#0039ff 0,#010dff 114.5px,#4100ff 160.5px,#ca00ff 241.5px,#fb00fd 268.5px,#ff00d9 292.5px,#ff00a9 333.5px,#ff007e 390.5px,#ff0072 413px)"></i><i style="top:258px;height:2px;background:linear-gradient(90deg,#0038ff 0,#010dff 114.5px,#3900ff 155.5px,#bf00ff 236.5px,#fa00fe 269.5px,#ff00e3 287.5px,#ff00b0 328.5px,#ff0083 385.5px,#ff0074 413px)"></i><i style="top:260px;height:2px;background:linear-gradient(90deg,#0037ff 0,#010cff 114.5px,#3800ff 155.5px,#bd00ff 236.5px,#fc00fc 273.5px,#ff00c1 314.5px,#ff0092 365.5px,#ff0076 411.5px,#ff0075 413px)"></i><i style="top:262px;height:2px;background:linear-gradient(90deg,#0036ff 0,#010bff 114.5px,#3100ff 151.5px,#b300ff 232.5px,#fb00fd 273.5px,#ff00d1 303.5px,#ff00a0 349.5px,#ff007a 406.5px,#ff0077 413px)"></i><i style="top:264px;height:2px;background:linear-gradient(90deg,#0034ff 0,#010bff 114.5px,#2a00ff 147.5px,#aa00ff 228.5px,#fa00fe 274.5px,#ff00de 296.5px,#ff00ad 337.5px,#ff0082 394.5px,#ff0078 413px)"></i><i style="top:266px;height:2px;background:linear-gradient(90deg,#0033ff 0,#010aff 114.5px,#2500ff 144.5px,#a300ff 225.5px,#fb00fd 276.5px,#ff00d6 303.5px,#ff00a4 349.5px,#ff007d 406.5px,#ff0079 413px)"></i><i style="top:268px;height:2px;background:linear-gradient(90deg,#0032ff 0,#0009ff 114.5px,#2000ff 141.5px,#9d00ff 222.5px,#fc00fc 279.5px,#ff00bd 325.5px,#ff0091 376.5px,#ff007c 409.5px,#ff007b 413px)"></i><i style="top:270px;height:2px;background:linear-gradient(90deg,#0031ff 0,#0009ff 114.5px,#2000ff 141.5px,#9b00ff 222.5px,#fb00fd 279.5px,#ff00d7 306.5px,#ff00a5 352.5px,#ff007e 409.5px,#ff007c 413px)"></i><i style="top:272px;height:2px;background:linear-gradient(90deg,#0030ff 0,#0008ff 114.5px,#1b00ff 138.5px,#9400ff 219.5px,#f400ff 276.5px,#ff00f5 288.5px,#ff00c2 325.5px,#ff0094 376.5px,#ff007f 409.5px,#ff007e 413px)"></i><i style="top:274px;height:2px;background:linear-gradient(90deg,#0030ff 0,#0007ff 114.5px,#1800ff 136.5px,#8f00ff 217.5px,#f900fe 281.5px,#ff00e9 297.5px,#ff00b6 338.5px,#ff0089 395.5px,#ff0080 411.5px,#ff007f 413px)"></i><i style="top:276px;height:2px;background:linear-gradient(90deg,#002fff 0,#0007ff 114.5px,#1700ff 136.5px,#8e00ff 217.5px,#f700ff 281.5px,#ff00f0 294.5px,#ff00bb 335.5px,#ff008c 392.5px,#ff0080 413px)"></i><i style="top:278px;height:2px;background:linear-gradient(90deg,#002eff 0,#0006ff 114.5px,#1400ff 134.5px,#8900ff 215.5px,#fc00fc 287.5px,#ff00bf 333.5px,#ff008f 390.5px,#ff0082 413px)"></i><i style="top:280px;height:2px;background:linear-gradient(90deg,#002dff 0,#0006ff 114.5px,#1100ff 132.5px,#8400ff 213.5px,#f800fe 285.5px,#ff00ec 300.5px,#ff00b9 341.5px,#ff008c 398.5px,#ff0083 413px)"></i><i style="top:282px;height:2px;background:linear-gradient(90deg,#002cff 0,#0005ff 114.5px,#1100ff 132.5px,#8300ff 213.5px,#f600ff 285.5px,#ff00f2 298.5px,#ff00bd 339.5px,#ff008e 396.5px,#ff0085 413px)"></i><i style="top:284px;height:2px;background:linear-gradient(90deg,#002bff 0,#0004ff 114.5px,#1000ff 132.5px,#8100ff 213.5px,#f400ff 285.5px,#ff00f4 298.5px,#ff00bf 339.5px,#ff0090 396.5px,#ff0086 413px)"></i><i style="top:286px;height:2px;background:linear-gradient(90deg,#002aff 0,#0004ff 114.5px,#0d00ff 130.5px,#7d00ff 211.5px,#fb00fd 292.5px,#ff00c2 338.5px,#ff0092 395.5px,#ff0088 411.5px,#ff0088 413px)"></i><i style="top:288px;height:2px;background:linear-gradient(90deg,#0029ff 0,#0003ff 114.5px,#0d00ff 130.5px,#7b00ff 211.5px,#f900fe 292.5px,#ff00e7 310.5px,#ff00b2 356.5px,#ff008c 407.5px,#ff0089 413px)"></i><i style="top:290px;height:2px;background:linear-gradient(90deg,#0028ff 0,#0003ff 114.5px,#0c00ff 130.5px,#7a00ff 211.5px,#f700ff 292.5px,#ff00f0 306.5px,#ff00bd 347.5px,#ff008f 404.5px,#ff008b 413px)"></i><i style="top:292px;height:2px;background:linear-gradient(90deg,#0027ff 0,#0002ff 114.5px,#0c00ff 130.5px,#7800ff 211.5px,#f500ff 292.5px,#ff00f4 305.5px,#ff00c0 346.5px,#ff0092 403.5px,#ff008c 413px)"></i><i style="top:294px;height:2px;background:linear-gradient(90deg,#0027ff 0,#0002ff 114.5px,#0c00ff 130.5px,#7700ff 211.5px,#f300ff 292.5px,#ff00f6 305.5px,#ff00c2 346.5px,#ff0093 403.5px,#ff008d 413px)"></i><i style="top:296px;height:2px;background:linear-gradient(90deg,#0026ff 0,#0001ff 114.5px,#0b00ff 130.5px,#7600ff 211.5px,#fd00fc 302.5px,#ff00c2 348.5px,#ff0093 405.5px,#ff008f 413px)"></i><i style="top:298px;height:2px;background:linear-gradient(90deg,#0025ff 0,#0001ff 114.5px,#0b00ff 130.5px,#8300ff 221.5px,#fc00fd 302.5px,#ff00bf 353.5px,#ff0092 410.5px,#ff0090 413px)"></i><i style="top:300px;height:2px;background:linear-gradient(90deg,#0024ff 0,#0001ff 114.5px,#0b00ff 130.5px,#8100ff 221.5px,#fa00fe 302.5px,#ff00e2 324.5px,#ff00b1 370.5px,#ff0093 411.5px,#ff0092 413px)"></i><i style="top:302px;height:2px;background:linear-gradient(90deg,#0023ff 0,#0000ff 114.5px,#0a00ff 130.5px,#8000ff 221.5px,#f800ff 302.5px,#ff00ee 317.5px,#ff00b9 363.5px,#ff0095 409.5px,#ff0093 413px)"></i><i style="top:304px;height:2px;background:linear-gradient(90deg,#0023ff 0,#0000ff 114.5px,#0a00ff 130.5px,#7f00ff 221.5px,#f600ff 302.5px,#ff00f3 315.5px,#ff00c1 356.5px,#ff0098 407.5px,#ff0095 413px)"></i><i style="top:306px;height:2px;background:linear-gradient(90deg,#0022ff 0,#0000ff 114.5px,#0900ff 130.5px,#7d00ff 221.5px,#f400ff 302.5px,#ff00f6 315.5px,#ff00c3 356.5px,#ff009a 407.5px,#ff0096 413px)"></i><i style="top:308px;height:2px;background:linear-gradient(90deg,#0021ff 0,#0000ff 114.5px,#0900ff 130.5px,#7c00ff 221.5px,#f200ff 302.5px,#ff00f7 316.5px,#ff00bf 362.5px,#ff009a 408.5px,#ff0098 413px)"></i><i style="top:310px;height:2px;background:linear-gradient(90deg,#0021ff 0,#0000ff 114.5px,#0900ff 130.5px,#7b00ff 221.5px,#fc00fd 312.5px,#ff00c0 363.5px,#ff009b 409.5px,#ff0099 413px)"></i><i style="top:312px;height:2px;background:linear-gradient(90deg,#0020ff 0,#0000ff 114.5px,#0800ff 130.5px,#7900ff 221.5px,#fb00fe 312.5px,#ff00d1 349.5px,#ff009f 406.5px,#ff009b 413px)"></i><i style="top:314px;height:2px;background:linear-gradient(90deg,#001fff 0,#0000ff 114.5px,#0800ff 130.5px,#7800ff 221.5px,#f900fe 312.5px,#ff00ea 330.5px,#ff00b8 376.5px,#ff009e 409.5px,#ff009c 413px)"></i><i style="top:316px;height:2px;background:linear-gradient(90deg,#001eff 0,#0000ff 114.5px,#0800ff 130.5px,#7700ff 221.5px,#f700ff 312.5px,#ff00f2 326.5px,#ff00bd 372.5px,#ff00a0 409.5px,#ff009e 413px)"></i><i style="top:318px;height:2px;background:linear-gradient(90deg,#001eff 0,#0000ff 102.5px,#0400ff 126.5px,#6300ff 207.5px,#f100ff 309.5px,#ff00f8 323.5px,#ff00c2 369.5px,#ff00a1 410.5px,#ff009f 413px)"></i><i style="top:320px;height:2px;background:linear-gradient(90deg,#001dff 0,#0000ff 102.5px,#0300ff 126.5px,#6200ff 207.5px,#fd00fc 321.5px,#ff00c1 372.5px,#ff00a3 409.5px,#ff00a1 413px)"></i><i style="top:322px;height:2px;background:linear-gradient(90deg,#001cff 0,#0000ff 102.5px,#0300ff 126.5px,#6100ff 207.5px,#fc00fd 321.5px,#ff00bd 378.5px,#ff00a3 411.5px,#ff00a2 413px)"></i><i style="top:324px;height:2px;background:linear-gradient(90deg,#001cff 0,#0000ff 102.5px,#0300ff 126.5px,#6000ff 207.5px,#fb00fe 321.5px,#ff00de 348.5px,#ff00ad 399.5px,#ff00a4 413px)"></i><i style="top:326px;height:2px;background:linear-gradient(90deg,#001bff 0,#0000ff 102.5px,#0300ff 126.5px,#5f00ff 207.5px,#f900ff 321.5px,#ff00ee 337.5px,#ff00bc 383.5px,#ff00a7 410.5px,#ff00a5 413px)"></i><i style="top:328px;height:2px;background:linear-gradient(90deg,#001aff 0,#0000ff 102.5px,#0200ff 126.5px,#5e00ff 207.5px,#f700ff 321.5px,#ff00f3 335.5px,#ff00c0 381.5px,#ff00a8 411.5px,#ff00a7 413px)"></i><i style="top:330px;height:2px;background:linear-gradient(90deg,#001aff 0,#0000ff 102.5px,#0200ff 126.5px,#5d00ff 207.5px,#f500ff 321.5px,#ff00f5 335.5px,#ff00c2 381.5px,#ff00a9 411.5px,#ff00a8 413px)"></i><i style="top:332px;height:2px;background:linear-gradient(90deg,#0019ff 0,#0000ff 102.5px,#0400ff 129.5px,#6c00ff 220.5px,#f400ff 322.5px,#ff00f6 336.5px,#ff00c2 382.5px,#ff00aa 413px)"></i><i style="top:334px;height:2px;background:linear-gradient(90deg,#0019ff 0,#0000ff 102.5px,#0400ff 129.5px,#6b00ff 220.5px,#f200ff 322.5px,#ff00f8 336.5px,#ff00c4 382.5px,#ff00ac 413px)"></i><i style="top:336px;height:2px;background:linear-gradient(90deg,#0018ff 0,#0000ff 91.5px,#0300ff 128.5px,#6900ff 219.5px,#fd00fd 333.5px,#ff00bf 390.5px,#ff00ad 413px)"></i><i style="top:338px;height:2px;background:linear-gradient(90deg,#0017ff 0,#0000ff 91.5px,#0300ff 128.5px,#6800ff 219.5px,#fc00fe 333.5px,#ff00c0 390.5px,#ff00af 413px)"></i><i style="top:340px;height:2px;background:linear-gradient(90deg,#0017ff 0,#0000ff 91.5px,#0300ff 128.5px,#6700ff 219.5px,#fa00fe 333.5px,#ff00e6 355.5px,#ff00b5 406.5px,#ff00b0 413px)"></i><i style="top:342px;height:2px;background:linear-gradient(90deg,#0016ff 0,#0000ff 91.5px,#0200ff 128.5px,#6600ff 219.5px,#f800ff 333.5px,#ff00f0 349.5px,#ff00bb 400.5px,#ff00b2 413px)"></i><i style="top:344px;height:2px;background:linear-gradient(90deg,#0016ff 0,#0000ff 91.5px,#0200ff 128.5px,#6500ff 219.5px,#f600ff 333.5px,#ff00f3 348.5px,#ff00be 399.5px,#ff00b3 413px)"></i><i style="top:346px;height:2px;background:linear-gradient(90deg,#0015ff 0,#0000ff 91.5px,#0200ff 128.5px,#6400ff 219.5px,#f400ff 333.5px,#ff00f6 347.5px,#ff00c0 398.5px,#ff00b5 413px)"></i><i style="top:348px;height:2px;background:linear-gradient(90deg,#0014ff 0,#0000ff 91.5px,#0200ff 128.5px,#6300ff 219.5px,#f200ff 333.5px,#ff00f7 348.5px,#ff00c1 399.5px,#ff00b6 413px)"></i><i style="top:350px;height:2px;background:linear-gradient(90deg,#0014ff 0,#0000ff 91.5px,#0200ff 128.5px,#5600ff 209.5px,#e300ff 323.5px,#fe00fa 347.5px,#ff00c4 398.5px,#ff00b8 413px)"></i><i style="top:352px;height:2px;background:linear-gradient(90deg,#0013ff 0,#0000ff 81.5px,#0100ff 127.5px,#5400ff 208.5px,#e000ff 322.5px,#fd00fd 346.5px,#ff00c1 403.5px,#ff00ba 413px)"></i><i style="top:354px;height:2px;background:linear-gradient(90deg,#0013ff 0,#0000ff 81.5px,#0100ff 127.5px,#4900ff 199.5px,#d200ff 313.5px,#fc00fe 346.5px,#ff00c3 403.5px,#ff00bb 413px)"></i><i style="top:356px;height:2px;background:linear-gradient(90deg,#0012ff 0,#0000ff 81.5px,#0100ff 127.5px,#4900ff 199.5px,#d100ff 313.5px,#fe00fc 350.5px,#ff00c1 407.5px,#ff00bd 413px)"></i><i style="top:358px;height:2px;background:linear-gradient(90deg,#0012ff 0,#0000ff 81.5px,#0100ff 127.5px,#4800ff 199.5px,#cf00ff 313.5px,#fd00fd 350.5px,#ff00c2 407.5px,#ff00be 413px)"></i><i style="top:360px;height:2px;background:linear-gradient(90deg,#0011ff 0,#0000ff 81.5px,#0400ff 132.5px,#6e00ff 234.5px,#fa00ff 348.5px,#ff00eb 368.5px,#ff00c2 409.5px,#ff00c0 413px)"></i><i style="top:362px;height:2px;background:linear-gradient(90deg,#0011ff 0,#0000ff 81.5px,#0300ff 132.5px,#6d00ff 234.5px,#f800ff 348.5px,#ff00f2 364.5px,#ff00c3 410.5px,#ff00c1 413px)"></i><i style="top:364px;height:2px;background:linear-gradient(90deg,#0010ff 0,#0000ff 81.5px,#0300ff 132.5px,#6c00ff 234.5px,#f600ff 348.5px,#ff00f5 363.5px,#ff00c6 409.5px,#ff00c3 413px)"></i><i style="top:366px;height:2px;background:linear-gradient(90deg,#0010ff 0,#0000ff 81.5px,#0300ff 132.5px,#6b00ff 234.5px,#f400ff 348.5px,#ff00f7 363.5px,#ff00c7 409.5px,#ff00c5 413px)"></i><i style="top:368px;height:2px;background:linear-gradient(90deg,#000fff 0,#0000ff 72.5px,#0100ff 129.5px,#5000ff 210.5px,#e500ff 338.5px,#fe00fc 360.5px,#ff00c7 411.5px,#ff00c6 413px)"></i><i style="top:370px;height:2px;background:linear-gradient(90deg,#000fff 0,#0000ff 72.5px,#0100ff 129.5px,#4f00ff 210.5px,#e400ff 338.5px,#fe00fb 362.5px,#ff00cb 408.5px,#ff00c8 413px)"></i><i style="top:372px;height:2px;background:linear-gradient(90deg,#000eff 0,#0000ff 72.5px,#0100ff 129.5px,#4e00ff 210.5px,#e200ff 338.5px,#fd00fd 362.5px,#ff00cd 408.5px,#ff00c9 413px)"></i><i style="top:374px;height:2px;background:linear-gradient(90deg,#000eff 0,#0000ff 72.5px,#0100ff 129.5px,#4e00ff 210.5px,#e000ff 338.5px,#fe00fc 365.5px,#ff00cc 411.5px,#ff00cb 413px)"></i><i style="top:376px;height:2px;background:linear-gradient(90deg,#000dff 0,#0000ff 72.5px,#0100ff 129.5px,#4400ff 201.5px,#d300ff 329.5px,#fe00fc 366.5px,#ff00cd 413px)"></i><i style="top:378px;height:2px;background:linear-gradient(90deg,#000dff 0,#0000ff 72.5px,#0100ff 129.5px,#4300ff 201.5px,#d200ff 329.5px,#fd00fd 366.5px,#ff00ce 413px)"></i><i style="top:380px;height:2px;background:linear-gradient(90deg,#000cff 0,#0000ff 72.5px,#0000ff 129.5px,#4200ff 201.5px,#d000ff 329.5px,#fe00fb 370.5px,#ff00d1 411.5px,#ff00d0 413px)"></i><i style="top:382px;height:2px;background:linear-gradient(90deg,#000cff 0,#0000ff 64.5px,#0000ff 128.5px,#2c00ff 179.5px,#b500ff 307.5px,#fe00fc 371.5px,#ff00d2 413px)"></i><i style="top:384px;height:2px;background:linear-gradient(90deg,#000cff 0,#0000ff 64.5px,#0000ff 128.5px,#2b00ff 179.5px,#b300ff 307.5px,#fd00fd 371.5px,#ff00d3 413px)"></i><i style="top:386px;height:2px;background:linear-gradient(90deg,#000bff 0,#0000ff 64.5px,#0000ff 128.5px,#2600ff 174.5px,#ac00ff 302.5px,#fe00fc 374.5px,#ff00d6 411.5px,#ff00d5 413px)"></i><i style="top:388px;height:2px;background:linear-gradient(90deg,#000bff 0,#0000ff 64.5px,#0000ff 128.5px,#2100ff 169.5px,#a500ff 297.5px,#f900ff 369.5px,#ff00f0 387.5px,#ff00d7 411.5px,#ff00d6 413px)"></i><i style="top:390px;height:2px;background:linear-gradient(90deg,#000aff 0,#0000ff 64.5px,#0300ff 136.5px,#6500ff 238.5px,#f300ff 366.5px,#ff00f7 382.5px,#ff00d8 413px)"></i><i style="top:392px;height:2px;background:linear-gradient(90deg,#000aff 0,#0000ff 64.5px,#0300ff 136.5px,#6400ff 238.5px,#f200ff 366.5px,#ff00f9 382.5px,#ff00da 413px)"></i><i style="top:394px;height:2px;background:linear-gradient(90deg,#0009ff 0,#0000ff 64.5px,#0300ff 136.5px,#6300ff 238.5px,#f000ff 366.5px,#ff00f9 384.5px,#ff00dc 411.5px,#ff00db 413px)"></i><i style="top:396px;height:2px;background:linear-gradient(90deg,#0009ff 0,#0000ff 64.5px,#0300ff 136.5px,#6200ff 238.5px,#fe00fc 382.5px,#ff00dd 413px)"></i><i style="top:398px;height:2px;background:linear-gradient(90deg,#0009ff 0,#0000ff 64.5px,#0300ff 136.5px,#6100ff 238.5px,#fd00fd 382.5px,#ff00df 413px)"></i><i style="top:400px;height:2px;background:linear-gradient(90deg,#0008ff 0,#0000ff 57.5px,#0000ff 129.5px,#1c00ff 166.5px,#9b00ff 294.5px,#fe00fc 385.5px,#ff00e0 413px)"></i><i style="top:402px;height:1px;background:linear-gradient(90deg,#0008ff 0,#0000ff 57.5px,#0000ff 129.5px,#1c00ff 166.5px,#9a00ff 294.5px,#fe00fd 385.5px,#ff00e1 413px)"></i></div><svg id="ov" width="1010" height="568" viewBox="0 0 1010 568"><defs><linearGradient id="dimg" gradientUnits="userSpaceOnUse" x1="700" y1="0" x2="800" y2="0"><stop offset="0" stop-color="#000" stop-opacity=".4"/><stop offset="1" stop-color="#000" stop-opacity=".3"/></linearGradient><clipPath id="pc"><rect x="516" y="73" width="413" height="403"/></clipPath></defs><path d="M692.24 464.60 L692.21 464.60 L692.18 464.58 L692.16 464.56 L692.13 464.56 L692.10 464.57 L692.08 464.60 L692.05 464.65 L692.01 464.69 L691.97 464.71 L691.92 464.71 L691.86 464.69 L691.79 464.66 L691.73 464.65 L691.67 464.66 L691.63 464.70 L691.60 464.76 L691.58 464.83 L691.55 464.89 L691.51 464.94 L691.48 464.97 L691.43 465.00 L691.38 465.01 L691.31 465.02 L691.22 465.03 L691.13 465.02 L691.03 465.01 L690.91 464.99 L690.80 464.97 L690.70 464.97 L690.60 464.97 L690.51 464.98 L690.40 464.98 L690.28 464.97 L690.15 464.94 L690.02 464.91 L689.88 464.86 L689.72 464.79 L689.54 464.68 L689.31 464.52 L689.03 464.32 L688.72 464.09 L688.38 463.82 L688.02 463.53 L687.64 463.20 L687.24 462.84 L686.82 462.44 L686.37 462.01 L685.88 461.53 L685.36 461.02 L684.80 460.46 L684.19 459.86 L683.54 459.21 L682.85 458.51 L682.12 457.77 L681.36 456.97 L680.57 456.12 L679.73 455.21 L678.86 454.25 L677.94 453.25 L676.98 452.21 L675.97 451.13 L674.92 450.01 L673.80 448.84 L672.63 447.60 L671.38 446.29 L670.07 444.91 L668.68 443.46 L667.23 441.93 L665.71 440.34 L664.12 438.68 L662.48 436.97 L660.78 435.18 L659.01 433.32 L657.18 431.37 L655.27 429.30 L653.27 427.11 L651.18 424.79 L649.02 422.34 L646.79 419.75 L644.49 417.03 L642.12 414.15 L639.67 411.11 L637.12 407.84 L634.44 404.27 L631.60 400.34 L628.54 395.96 L625.28 391.12 L621.82 385.83 L618.19 380.11 L614.43 374.01 L610.57 367.56 L606.60 360.74 L602.54 353.55 L598.38 345.98 L594.12 338.01 L589.79 329.64 L585.41 320.94 L580.99 311.94 L576.56 302.70 L572.14 293.30 L567.74 283.76 L563.38 274.12 L559.10 264.40 L554.95 254.64 L550.97 244.89 L547.22 235.23 L543.70 225.72 L540.40 216.40 L537.32 207.30 L534.43 198.45 L531.73 189.88 L529.26 181.64 L527.01 173.78 L524.98 166.31 L523.19 159.26 L521.62 152.65 L520.27 146.45 L519.12 140.64 L518.16 135.21 L517.39 130.15 L516.78 125.44 L516.34 121.08 L516.07 117.06 L515.95 113.34 L515.98 109.88 L516.15 106.65 L516.46 103.65 L516.91 100.87 L517.48 98.31 L518.20 95.96 L519.04 93.80 L519.99 91.84 L521.05 90.07 L522.21 88.50 L523.47 87.11 L524.82 85.91 L526.25 84.87 L527.76 83.98 L529.33 83.22 L530.95 82.60 L532.63 82.10 L534.36 81.69 L536.15 81.38 L537.97 81.13 L539.84 80.93 L541.74 80.78 L543.67 80.67 L545.63 80.60 L547.59 80.55 L549.55 80.52 L551.50 80.52 L553.46 80.53 L555.42 80.56 L557.39 80.61 L559.38 80.68 L561.40 80.76 L563.43 80.87 L565.48 80.99 L567.56 81.13 L569.67 81.28 L571.81 81.45 L573.99 81.64 L576.20 81.85 L578.44 82.07 L580.73 82.30 L583.05 82.55 L585.41 82.81 L587.82 83.08 L590.27 83.37 L592.76 83.68 L595.31 83.99 L597.91 84.32 L600.55 84.66 L603.25 85.01 L606.01 85.37 L608.82 85.75 L611.68 86.14 L614.61 86.54 L617.60 86.95 L620.65 87.37 L623.76 87.81 L626.93 88.25 L630.17 88.71 L633.48 89.18 L636.86 89.66 L640.30 90.15 L643.81 90.65 L647.40 91.17 L651.05 91.70 L654.78 92.23 L658.57 92.78 L662.45 93.35 L666.39 93.92 L670.41 94.51 L674.50 95.10 L678.66 95.71 L682.90 96.33 L687.20 96.96 L691.57 97.60 L696.01 98.25 L700.52 98.90 L705.10 99.57 L709.74 100.25 L714.44 100.93 L719.19 101.62 L724.00 102.32 L728.86 103.03 L733.77 103.75 L738.72 104.47 L743.72 105.20 L748.75 105.93 L753.82 106.67 L758.89 107.42 L763.96 108.16 L768.98 108.89 L773.94 109.62 L778.86 110.33 L783.73 111.04 L788.58 111.75 L793.42 112.46 L798.26 113.16 L803.09 113.87 L807.87 114.56 L812.58 115.25 L817.20 115.92 L821.71 116.58 L826.10 117.21 L830.40 117.84 L834.59 118.45 L838.70 119.04 L842.71 119.63 L846.62 120.20 L850.43 120.75 L854.13 121.29 L857.72 121.82 L861.19 122.33 L864.55 122.82 L867.79 123.29 L870.93 123.75 L873.95 124.19 L876.86 124.61 L879.68 125.02 L882.39 125.42 L885.02 125.80 L887.55 126.17 L889.99 126.52 L892.34 126.86 L894.61 127.20 L896.82 127.52 L898.98 127.83 L901.08 128.14 L903.13 128.44 L905.11 128.73 L907.04 129.01 L908.90 129.28 L910.70 129.55 L912.44 129.80 L914.12 130.04 L915.73 130.28 L917.28 130.51 L918.78 130.73 L920.22 130.94 L921.60 131.14 L922.91 131.33 L924.15 131.51 L925.32 131.68 L926.41 131.84 L927.43 131.99 L928.40 132.13 L929.33 132.26 L930.22 132.39 L931.07 132.52 L931.89 132.64 L932.66 132.75 L933.39 132.86 L934.08 132.96 L934.74 133.05 L935.35 133.14 L935.92 133.23 L936.45 133.31 L936.93 133.38 L937.37 133.44 L937.77 133.50 L938.13 133.55 L938.49 133.60 L938.83 133.65 L939.18 133.70 L939.51 133.75 L939.83 133.80 L940.14 133.85 L940.43 133.89 L940.70 133.93 L940.96 133.97 L941.22 134.00 L941.47 134.04 L941.73 134.08 L941.99 134.12 L942.25 134.16 L942.51 134.19 L942.76 134.23 L943.01 134.27 L943.25 134.30 L943.49 134.34 L943.72 134.37 L943.93 134.40 L944.10 134.43 L944.25 134.45 L944.37 134.47 L944.47 134.48 L944.56 134.49 L944.65 134.51 L944.74 134.52 L944.81 134.53 L944.88 134.54 L944.94 134.55 L944.99 134.56 L945.05 134.56 L945.09 134.57 L945.12 134.58 L945.12 134.58 Z M857.48 121.74 L583.04 86.64 L636.05 369.36 Z" fill="url(#dimg)" fill-rule="evenodd" clip-path="url(#pc)"/><path d="M515 72 H930 V477 H515 Z M692.24 464.60 L692.21 464.60 L692.18 464.58 L692.16 464.56 L692.13 464.56 L692.10 464.57 L692.08 464.60 L692.05 464.65 L692.01 464.69 L691.97 464.71 L691.92 464.71 L691.86 464.69 L691.79 464.66 L691.73 464.65 L691.67 464.66 L691.63 464.70 L691.60 464.76 L691.58 464.83 L691.55 464.89 L691.51 464.94 L691.48 464.97 L691.43 465.00 L691.38 465.01 L691.31 465.02 L691.22 465.03 L691.13 465.02 L691.03 465.01 L690.91 464.99 L690.80 464.97 L690.70 464.97 L690.60 464.97 L690.51 464.98 L690.40 464.98 L690.28 464.97 L690.15 464.94 L690.02 464.91 L689.88 464.86 L689.72 464.79 L689.54 464.68 L689.31 464.52 L689.03 464.32 L688.72 464.09 L688.38 463.82 L688.02 463.53 L687.64 463.20 L687.24 462.84 L686.82 462.44 L686.37 462.01 L685.88 461.53 L685.36 461.02 L684.80 460.46 L684.19 459.86 L683.54 459.21 L682.85 458.51 L682.12 457.77 L681.36 456.97 L680.57 456.12 L679.73 455.21 L678.86 454.25 L677.94 453.25 L676.98 452.21 L675.97 451.13 L674.92 450.01 L673.80 448.84 L672.63 447.60 L671.38 446.29 L670.07 444.91 L668.68 443.46 L667.23 441.93 L665.71 440.34 L664.12 438.68 L662.48 436.97 L660.78 435.18 L659.01 433.32 L657.18 431.37 L655.27 429.30 L653.27 427.11 L651.18 424.79 L649.02 422.34 L646.79 419.75 L644.49 417.03 L642.12 414.15 L639.67 411.11 L637.12 407.84 L634.44 404.27 L631.60 400.34 L628.54 395.96 L625.28 391.12 L621.82 385.83 L618.19 380.11 L614.43 374.01 L610.57 367.56 L606.60 360.74 L602.54 353.55 L598.38 345.98 L594.12 338.01 L589.79 329.64 L585.41 320.94 L580.99 311.94 L576.56 302.70 L572.14 293.30 L567.74 283.76 L563.38 274.12 L559.10 264.40 L554.95 254.64 L550.97 244.89 L547.22 235.23 L543.70 225.72 L540.40 216.40 L537.32 207.30 L534.43 198.45 L531.73 189.88 L529.26 181.64 L527.01 173.78 L524.98 166.31 L523.19 159.26 L521.62 152.65 L520.27 146.45 L519.12 140.64 L518.16 135.21 L517.39 130.15 L516.78 125.44 L516.34 121.08 L516.07 117.06 L515.95 113.34 L515.98 109.88 L516.15 106.65 L516.46 103.65 L516.91 100.87 L517.48 98.31 L518.20 95.96 L519.04 93.80 L519.99 91.84 L521.05 90.07 L522.21 88.50 L523.47 87.11 L524.82 85.91 L526.25 84.87 L527.76 83.98 L529.33 83.22 L530.95 82.60 L532.63 82.10 L534.36 81.69 L536.15 81.38 L537.97 81.13 L539.84 80.93 L541.74 80.78 L543.67 80.67 L545.63 80.60 L547.59 80.55 L549.55 80.52 L551.50 80.52 L553.46 80.53 L555.42 80.56 L557.39 80.61 L559.38 80.68 L561.40 80.76 L563.43 80.87 L565.48 80.99 L567.56 81.13 L569.67 81.28 L571.81 81.45 L573.99 81.64 L576.20 81.85 L578.44 82.07 L580.73 82.30 L583.05 82.55 L585.41 82.81 L587.82 83.08 L590.27 83.37 L592.76 83.68 L595.31 83.99 L597.91 84.32 L600.55 84.66 L603.25 85.01 L606.01 85.37 L608.82 85.75 L611.68 86.14 L614.61 86.54 L617.60 86.95 L620.65 87.37 L623.76 87.81 L626.93 88.25 L630.17 88.71 L633.48 89.18 L636.86 89.66 L640.30 90.15 L643.81 90.65 L647.40 91.17 L651.05 91.70 L654.78 92.23 L658.57 92.78 L662.45 93.35 L666.39 93.92 L670.41 94.51 L674.50 95.10 L678.66 95.71 L682.90 96.33 L687.20 96.96 L691.57 97.60 L696.01 98.25 L700.52 98.90 L705.10 99.57 L709.74 100.25 L714.44 100.93 L719.19 101.62 L724.00 102.32 L728.86 103.03 L733.77 103.75 L738.72 104.47 L743.72 105.20 L748.75 105.93 L753.82 106.67 L758.89 107.42 L763.96 108.16 L768.98 108.89 L773.94 109.62 L778.86 110.33 L783.73 111.04 L788.58 111.75 L793.42 112.46 L798.26 113.16 L803.09 113.87 L807.87 114.56 L812.58 115.25 L817.20 115.92 L821.71 116.58 L826.10 117.21 L830.40 117.84 L834.59 118.45 L838.70 119.04 L842.71 119.63 L846.62 120.20 L850.43 120.75 L854.13 121.29 L857.72 121.82 L861.19 122.33 L864.55 122.82 L867.79 123.29 L870.93 123.75 L873.95 124.19 L876.86 124.61 L879.68 125.02 L882.39 125.42 L885.02 125.80 L887.55 126.17 L889.99 126.52 L892.34 126.86 L894.61 127.20 L896.82 127.52 L898.98 127.83 L901.08 128.14 L903.13 128.44 L905.11 128.73 L907.04 129.01 L908.90 129.28 L910.70 129.55 L912.44 129.80 L914.12 130.04 L915.73 130.28 L917.28 130.51 L918.78 130.73 L920.22 130.94 L921.60 131.14 L922.91 131.33 L924.15 131.51 L925.32 131.68 L926.41 131.84 L927.43 131.99 L928.40 132.13 L929.33 132.26 L930.22 132.39 L931.07 132.52 L931.89 132.64 L932.66 132.75 L933.39 132.86 L934.08 132.96 L934.74 133.05 L935.35 133.14 L935.92 133.23 L936.45 133.31 L936.93 133.38 L937.37 133.44 L937.77 133.50 L938.13 133.55 L938.49 133.60 L938.83 133.65 L939.18 133.70 L939.51 133.75 L939.83 133.80 L940.14 133.85 L940.43 133.89 L940.70 133.93 L940.96 133.97 L941.22 134.00 L941.47 134.04 L941.73 134.08 L941.99 134.12 L942.25 134.16 L942.51 134.19 L942.76 134.23 L943.01 134.27 L943.25 134.30 L943.49 134.34 L943.72 134.37 L943.93 134.40 L944.10 134.43 L944.25 134.45 L944.37 134.47 L944.47 134.48 L944.56 134.49 L944.65 134.51 L944.74 134.52 L944.81 134.53 L944.88 134.54 L944.94 134.55 L944.99 134.56 L945.05 134.56 L945.09 134.57 L945.12 134.58 L945.12 134.58 Z" fill="#202020" fill-rule="evenodd" clip-path="url(#pc)"/><rect x="84.8" y="73.0" width="288.2" height="403.0" fill="#202020"/><line x1="123.2" y1="73.0" x2="123.2" y2="476.0" stroke="#000" stroke-width="3.6" stroke-opacity=".55"/><line x1="123.2" y1="73.0" x2="123.2" y2="476.0" stroke="#a8a8a8" stroke-width="1.7"/><line x1="161.6" y1="73.0" x2="161.6" y2="476.0" stroke="#000" stroke-width="3.6" stroke-opacity=".55"/><line x1="161.6" y1="73.0" x2="161.6" y2="476.0" stroke="#a8a8a8" stroke-width="1.7"/><line x1="200.1" y1="73.0" x2="200.1" y2="476.0" stroke="#000" stroke-width="3.6" stroke-opacity=".55"/><line x1="200.1" y1="73.0" x2="200.1" y2="476.0" stroke="#a8a8a8" stroke-width="1.7"/><line x1="238.5" y1="73.0" x2="238.5" y2="476.0" stroke="#000" stroke-width="3.6" stroke-opacity=".55"/><line x1="238.5" y1="73.0" x2="238.5" y2="476.0" stroke="#a8a8a8" stroke-width="1.7"/><line x1="276.9" y1="73.0" x2="276.9" y2="476.0" stroke="#000" stroke-width="3.6" stroke-opacity=".55"/><line x1="276.9" y1="73.0" x2="276.9" y2="476.0" stroke="#a8a8a8" stroke-width="1.7"/><line x1="315.3" y1="73.0" x2="315.3" y2="476.0" stroke="#000" stroke-width="3.6" stroke-opacity=".55"/><line x1="315.3" y1="73.0" x2="315.3" y2="476.0" stroke="#a8a8a8" stroke-width="1.7"/><line x1="353.7" y1="73.0" x2="353.7" y2="476.0" stroke="#000" stroke-width="3.6" stroke-opacity=".55"/><line x1="353.7" y1="73.0" x2="353.7" y2="476.0" stroke="#a8a8a8" stroke-width="1.7"/><rect x="84.8" y="73.0" width="288.2" height="403.0" fill="none" stroke="#000" stroke-opacity=".6" stroke-width="3.4"/><rect x="84.8" y="73.0" width="288.2" height="403.0" fill="none" stroke="#a8a8a8" stroke-width="1.6"/><rect x="85.7" y="72.20" width="20.2" height="4.0" fill="#000" fill-opacity=".9"/><rect x="85.7" y="73.20" width="19.2" height="2.0" fill="#d8d8a0" fill-opacity=".85"/><rect x="85.7" y="76.15" width="10.3" height="4.0" fill="#000" fill-opacity=".9"/><rect x="85.7" y="77.15" width="9.3" height="2.0" fill="#c040c0" fill-opacity=".85"/><rect x="85.7" y="80.09" width="32.5" height="4.0" fill="#000" fill-opacity=".9"/><rect x="85.7" y="81.09" width="31.5" height="2.0" fill="#80b8b8" fill-opacity=".85"/><rect x="85.7" y="84.04" width="20.9" height="4.0" fill="#000" fill-opacity=".9"/><rect x="85.7" y="85.04" width="19.9" height="2.0" fill="#2828c8" fill-opacity=".85"/><rect x="85.7" y="87.99" width="16.3" height="4.0" fill="#000" fill-opacity=".9"/><rect x="85.7" y="88.99" width="15.3" height="2.0" fill="#30a030" fill-opacity=".85"/><rect x="85.7" y="91.93" width="6.5" height="4.0" fill="#000" fill-opacity=".9"/><rect x="85.7" y="92.93" width="5.5" height="2.0" fill="#a03030" fill-opacity=".85"/><rect x="85.7" y="95.88" width="32.9" height="4.0" fill="#000" fill-opacity=".9"/><rect x="85.7" y="96.88" width="31.9" height="2.0" fill="#805838" fill-opacity=".85"/><rect x="85.7" y="99.83" width="20.5" height="4.0" fill="#000" fill-opacity=".9"/><rect x="85.7" y="100.83" width="19.5" height="2.0" fill="#c8d0a0" fill-opacity=".85"/><rect x="85.7" y="103.77" width="28.3" height="4.0" fill="#000" fill-opacity=".9"/><rect x="85.7" y="104.77" width="27.3" height="2.0" fill="#b0a070" fill-opacity=".85"/><rect x="85.7" y="107.72" width="34.7" height="4.0" fill="#000" fill-opacity=".9"/><rect x="85.7" y="108.72" width="33.7" height="2.0" fill="#a07850" fill-opacity=".85"/><rect x="85.7" y="111.67" width="19.3" height="4.0" fill="#000" fill-opacity=".9"/><rect x="85.7" y="112.67" width="18.3" height="2.0" fill="#50a050" fill-opacity=".85"/><rect x="85.7" y="115.61" width="24.3" height="4.0" fill="#000" fill-opacity=".9"/><rect x="85.7" y="116.61" width="23.3" height="2.0" fill="#206838" fill-opacity=".85"/><rect x="85.7" y="119.56" width="18.6" height="4.0" fill="#000" fill-opacity=".9"/><rect x="85.7" y="120.56" width="17.6" height="2.0" fill="#90a878" fill-opacity=".85"/><rect x="85.7" y="123.50" width="19.5" height="4.0" fill="#000" fill-opacity=".9"/><rect x="85.7" y="124.50" width="18.5" height="2.0" fill="#50a070" fill-opacity=".85"/><rect x="85.7" y="127.45" width="34.9" height="4.0" fill="#000" fill-opacity=".9"/><rect x="85.7" y="128.45" width="33.9" height="2.0" fill="#206850" fill-opacity=".85"/><rect x="85.7" y="131.40" width="19.5" height="4.0" fill="#000" fill-opacity=".9"/><rect x="85.7" y="132.40" width="18.5" height="2.0" fill="#50a060" fill-opacity=".85"/><rect x="85.7" y="135.34" width="20.8" height="4.0" fill="#000" fill-opacity=".9"/><rect x="85.7" y="136.34" width="19.8" height="2.0" fill="#40a060" fill-opacity=".85"/><rect x="85.7" y="139.29" width="43.3" height="4.0" fill="#000" fill-opacity=".9"/><rect x="85.7" y="140.29" width="42.3" height="2.0" fill="#504838" fill-opacity=".85"/><rect x="85.7" y="143.24" width="30.5" height="4.0" fill="#000" fill-opacity=".9"/><rect x="85.7" y="144.24" width="29.5" height="2.0" fill="#c8b878" fill-opacity=".85"/><rect x="85.7" y="147.18" width="32.3" height="4.0" fill="#000" fill-opacity=".9"/><rect x="85.7" y="148.18" width="31.3" height="2.0" fill="#c0a040" fill-opacity=".85"/><rect x="85.7" y="151.13" width="30.1" height="4.0" fill="#000" fill-opacity=".9"/><rect x="85.7" y="152.13" width="29.1" height="2.0" fill="#d8a090" fill-opacity=".85"/><rect x="85.7" y="155.08" width="29.2" height="4.0" fill="#000" fill-opacity=".9"/><rect x="85.7" y="156.08" width="28.2" height="2.0" fill="#a06050" fill-opacity=".85"/><rect x="85.7" y="159.02" width="24.8" height="4.0" fill="#000" fill-opacity=".9"/><rect x="85.7" y="160.02" width="23.8" height="2.0" fill="#b09880" fill-opacity=".85"/><rect x="85.7" y="162.97" width="10.7" height="4.0" fill="#000" fill-opacity=".9"/><rect x="85.7" y="163.97" width="9.7" height="2.0" fill="#c08870" fill-opacity=".85"/><rect x="85.7" y="166.92" width="31.4" height="4.0" fill="#000" fill-opacity=".9"/><rect x="85.7" y="167.92" width="30.4" height="2.0" fill="#c0a090" fill-opacity=".85"/><rect x="85.7" y="170.86" width="25.2" height="4.0" fill="#000" fill-opacity=".9"/><rect x="85.7" y="171.86" width="24.2" height="2.0" fill="#d09078" fill-opacity=".85"/><rect x="85.7" y="174.81" width="16.0" height="4.0" fill="#000" fill-opacity=".9"/><rect x="85.7" y="175.81" width="15.0" height="2.0" fill="#c08878" fill-opacity=".85"/><rect x="85.7" y="178.76" width="15.1" height="4.0" fill="#000" fill-opacity=".9"/><rect x="85.7" y="179.76" width="14.1" height="2.0" fill="#30a080" fill-opacity=".85"/><rect x="85.7" y="182.70" width="21.7" height="4.0" fill="#000" fill-opacity=".9"/><rect x="85.7" y="183.70" width="20.7" height="2.0" fill="#308890" fill-opacity=".85"/><rect x="85.7" y="186.65" width="58.7" height="4.0" fill="#000" fill-opacity=".9"/><rect x="85.7" y="187.65" width="57.7" height="2.0" fill="#d0a030" fill-opacity=".85"/><rect x="85.7" y="190.60" width="26.6" height="4.0" fill="#000" fill-opacity=".9"/><rect x="85.7" y="191.60" width="25.6" height="2.0" fill="#b0a040" fill-opacity=".85"/><rect x="85.7" y="194.54" width="23.0" height="4.0" fill="#000" fill-opacity=".9"/><rect x="85.7" y="195.54" width="22.0" height="2.0" fill="#c09070" fill-opacity=".85"/><rect x="85.7" y="198.49" width="27.9" height="4.0" fill="#000" fill-opacity=".9"/><rect x="85.7" y="199.49" width="26.9" height="2.0" fill="#b08060" fill-opacity=".85"/><rect x="85.7" y="202.44" width="29.2" height="4.0" fill="#000" fill-opacity=".9"/><rect x="85.7" y="203.44" width="28.2" height="2.0" fill="#c09880" fill-opacity=".85"/><rect x="85.7" y="206.38" width="29.2" height="4.0" fill="#000" fill-opacity=".9"/><rect x="85.7" y="207.38" width="28.2" height="2.0" fill="#a08060" fill-opacity=".85"/><rect x="85.7" y="210.33" width="28.3" height="4.0" fill="#000" fill-opacity=".9"/><rect x="85.7" y="211.33" width="27.3" height="2.0" fill="#b08868" fill-opacity=".85"/><rect x="85.7" y="214.28" width="34.9" height="4.0" fill="#000" fill-opacity=".9"/><rect x="85.7" y="215.28" width="33.9" height="2.0" fill="#d09880" fill-opacity=".85"/><rect x="85.7" y="218.22" width="33.6" height="4.0" fill="#000" fill-opacity=".9"/><rect x="85.7" y="219.22" width="32.6" height="2.0" fill="#c08878" fill-opacity=".85"/><rect x="85.7" y="222.17" width="47.7" height="4.0" fill="#000" fill-opacity=".9"/><rect x="85.7" y="223.17" width="46.7" height="2.0" fill="#5080a0" fill-opacity=".85"/><rect x="85.7" y="226.11" width="119.6" height="4.0" fill="#000" fill-opacity=".9"/><rect x="85.7" y="227.11" width="118.6" height="2.0" fill="#183030" fill-opacity=".85"/><rect x="85.7" y="230.06" width="42.8" height="4.0" fill="#000" fill-opacity=".9"/><rect x="85.7" y="231.06" width="41.8" height="2.0" fill="#c09060" fill-opacity=".85"/><rect x="85.7" y="234.01" width="18.6" height="4.0" fill="#000" fill-opacity=".9"/><rect x="85.7" y="235.01" width="17.6" height="2.0" fill="#d07030" fill-opacity=".85"/><rect x="85.7" y="237.95" width="36.7" height="4.0" fill="#000" fill-opacity=".9"/><rect x="85.7" y="238.95" width="35.7" height="2.0" fill="#b0b0a0" fill-opacity=".85"/><rect x="85.7" y="241.90" width="95.3" height="4.0" fill="#000" fill-opacity=".9"/><rect x="85.7" y="242.90" width="94.3" height="2.0" fill="#183838" fill-opacity=".85"/><rect x="85.7" y="245.85" width="25.2" height="4.0" fill="#000" fill-opacity=".9"/><rect x="85.7" y="246.85" width="24.2" height="2.0" fill="#50a0a0" fill-opacity=".85"/><rect x="85.7" y="249.79" width="5.9" height="4.0" fill="#000" fill-opacity=".9"/><rect x="85.7" y="250.79" width="4.9" height="2.0" fill="#c02030" fill-opacity=".85"/><rect x="85.7" y="253.74" width="21.7" height="4.0" fill="#000" fill-opacity=".9"/><rect x="85.7" y="254.74" width="20.7" height="2.0" fill="#d0a090" fill-opacity=".85"/><rect x="85.7" y="257.69" width="36.7" height="4.0" fill="#000" fill-opacity=".9"/><rect x="85.7" y="258.69" width="35.7" height="2.0" fill="#a0b8b0" fill-opacity=".85"/><rect x="85.7" y="261.63" width="56.0" height="4.0" fill="#000" fill-opacity=".9"/><rect x="85.7" y="262.63" width="55.0" height="2.0" fill="#e0b0a0" fill-opacity=".85"/><rect x="85.7" y="265.58" width="32.3" height="4.0" fill="#000" fill-opacity=".9"/><rect x="85.7" y="266.58" width="31.3" height="2.0" fill="#6090a0" fill-opacity=".85"/><rect x="85.7" y="269.53" width="21.7" height="4.0" fill="#000" fill-opacity=".9"/><rect x="85.7" y="270.53" width="20.7" height="2.0" fill="#407080" fill-opacity=".85"/><rect x="85.7" y="273.47" width="6.3" height="4.0" fill="#000" fill-opacity=".9"/><rect x="85.7" y="274.47" width="5.3" height="2.0" fill="#b02040" fill-opacity=".85"/><rect x="85.7" y="277.42" width="5.9" height="4.0" fill="#000" fill-opacity=".9"/><rect x="85.7" y="278.42" width="4.9" height="2.0" fill="#d06070" fill-opacity=".85"/><rect x="85.7" y="281.37" width="56.0" height="4.0" fill="#000" fill-opacity=".9"/><rect x="85.7" y="282.37" width="55.0" height="2.0" fill="#d8b0a8" fill-opacity=".85"/><rect x="85.7" y="285.31" width="16.0" height="4.0" fill="#000" fill-opacity=".9"/><rect x="85.7" y="286.31" width="15.0" height="2.0" fill="#50a0b0" fill-opacity=".85"/><rect x="85.7" y="289.26" width="8.1" height="4.0" fill="#000" fill-opacity=".9"/><rect x="85.7" y="290.26" width="7.1" height="2.0" fill="#e06080" fill-opacity=".85"/><rect x="85.7" y="293.21" width="54.3" height="4.0" fill="#000" fill-opacity=".9"/><rect x="85.7" y="294.21" width="53.3" height="2.0" fill="#d0a868" fill-opacity=".85"/><rect x="85.7" y="297.15" width="7.2" height="4.0" fill="#000" fill-opacity=".9"/><rect x="85.7" y="298.15" width="6.2" height="2.0" fill="#b02828" fill-opacity=".85"/><rect x="85.7" y="301.10" width="35.3" height="4.0" fill="#000" fill-opacity=".9"/><rect x="85.7" y="302.10" width="34.3" height="2.0" fill="#30b030" fill-opacity=".85"/><rect x="85.7" y="305.05" width="11.1" height="4.0" fill="#000" fill-opacity=".9"/><rect x="85.7" y="306.05" width="10.1" height="2.0" fill="#203080" fill-opacity=".85"/><rect x="85.7" y="308.99" width="26.6" height="4.0" fill="#000" fill-opacity=".9"/><rect x="85.7" y="309.99" width="25.6" height="2.0" fill="#c0d0c0" fill-opacity=".85"/><rect x="85.7" y="312.94" width="31.4" height="4.0" fill="#000" fill-opacity=".9"/><rect x="85.7" y="313.94" width="30.4" height="2.0" fill="#2050a0" fill-opacity=".85"/><rect x="85.7" y="316.89" width="14.2" height="4.0" fill="#000" fill-opacity=".9"/><rect x="85.7" y="317.89" width="13.2" height="2.0" fill="#a040b0" fill-opacity=".85"/><rect x="85.7" y="320.83" width="35.8" height="4.0" fill="#000" fill-opacity=".9"/><rect x="85.7" y="321.83" width="34.8" height="2.0" fill="#602040" fill-opacity=".85"/><rect x="85.7" y="324.78" width="1.9" height="4.0" fill="#000" fill-opacity=".9"/><rect x="85.7" y="325.78" width="0.9" height="2.0" fill="#302020" fill-opacity=".85"/><rect x="85.7" y="328.72" width="16.9" height="4.0" fill="#000" fill-opacity=".9"/><rect x="85.7" y="329.72" width="15.9" height="2.0" fill="#e0e8d0" fill-opacity=".85"/><rect x="85.7" y="332.67" width="37.1" height="4.0" fill="#000" fill-opacity=".9"/><rect x="85.7" y="333.67" width="36.1" height="2.0" fill="#c09040" fill-opacity=".85"/><rect x="85.7" y="336.62" width="27.0" height="4.0" fill="#000" fill-opacity=".9"/><rect x="85.7" y="337.62" width="26.0" height="2.0" fill="#90b040" fill-opacity=".85"/><rect x="85.7" y="340.56" width="16.0" height="4.0" fill="#000" fill-opacity=".9"/><rect x="85.7" y="341.56" width="15.0" height="2.0" fill="#804090" fill-opacity=".85"/><rect x="85.7" y="344.51" width="11.6" height="4.0" fill="#000" fill-opacity=".9"/><rect x="85.7" y="345.51" width="10.6" height="2.0" fill="#d05060" fill-opacity=".85"/><rect x="85.7" y="348.46" width="21.3" height="4.0" fill="#000" fill-opacity=".9"/><rect x="85.7" y="349.46" width="20.3" height="2.0" fill="#304888" fill-opacity=".85"/><rect x="85.7" y="352.40" width="31.4" height="4.0" fill="#000" fill-opacity=".9"/><rect x="85.7" y="353.40" width="30.4" height="2.0" fill="#d08030" fill-opacity=".85"/><rect x="85.7" y="356.35" width="34.0" height="4.0" fill="#000" fill-opacity=".9"/><rect x="85.7" y="357.35" width="33.0" height="2.0" fill="#e8c0b0" fill-opacity=".85"/><rect x="85.7" y="360.30" width="2.8" height="4.0" fill="#000" fill-opacity=".9"/><rect x="85.7" y="361.30" width="1.8" height="2.0" fill="#303030" fill-opacity=".85"/><rect x="85.7" y="364.24" width="8.9" height="4.0" fill="#000" fill-opacity=".9"/><rect x="85.7" y="365.24" width="7.9" height="2.0" fill="#c0c0c0" fill-opacity=".85"/><rect x="85.7" y="368.19" width="6.7" height="4.0" fill="#000" fill-opacity=".9"/><rect x="85.7" y="369.19" width="5.7" height="2.0" fill="#c03060" fill-opacity=".85"/><rect x="85.7" y="372.14" width="8.5" height="4.0" fill="#000" fill-opacity=".9"/><rect x="85.7" y="373.14" width="7.5" height="2.0" fill="#803050" fill-opacity=".85"/><rect x="85.7" y="376.08" width="52.5" height="4.0" fill="#000" fill-opacity=".9"/><rect x="85.7" y="377.08" width="51.5" height="2.0" fill="#d0b8a0" fill-opacity=".85"/><rect x="85.7" y="380.03" width="28.3" height="4.0" fill="#000" fill-opacity=".9"/><rect x="85.7" y="381.03" width="27.3" height="2.0" fill="#50a060" fill-opacity=".85"/><rect x="85.7" y="383.98" width="8.5" height="4.0" fill="#000" fill-opacity=".9"/><rect x="85.7" y="384.98" width="7.5" height="2.0" fill="#b0b8b8" fill-opacity=".85"/><rect x="85.7" y="387.92" width="26.6" height="4.0" fill="#000" fill-opacity=".9"/><rect x="85.7" y="388.92" width="25.6" height="2.0" fill="#406030" fill-opacity=".85"/><rect x="85.7" y="391.87" width="57.8" height="4.0" fill="#000" fill-opacity=".9"/><rect x="85.7" y="392.87" width="56.8" height="2.0" fill="#708098" fill-opacity=".85"/><rect x="85.7" y="395.82" width="41.1" height="4.0" fill="#000" fill-opacity=".9"/><rect x="85.7" y="396.82" width="40.1" height="2.0" fill="#c07040" fill-opacity=".85"/><rect x="85.7" y="399.76" width="43.3" height="4.0" fill="#000" fill-opacity=".9"/><rect x="85.7" y="400.76" width="42.3" height="2.0" fill="#905040" fill-opacity=".85"/><rect x="85.7" y="403.71" width="74.1" height="4.0" fill="#000" fill-opacity=".9"/><rect x="85.7" y="404.71" width="73.1" height="2.0" fill="#c8c8c0" fill-opacity=".85"/><rect x="85.7" y="407.66" width="11.1" height="4.0" fill="#000" fill-opacity=".9"/><rect x="85.7" y="408.66" width="10.1" height="2.0" fill="#703050" fill-opacity=".85"/><rect x="85.7" y="411.60" width="11.6" height="4.0" fill="#000" fill-opacity=".9"/><rect x="85.7" y="412.60" width="10.6" height="2.0" fill="#b03060" fill-opacity=".85"/><rect x="85.7" y="415.55" width="1.9" height="4.0" fill="#000" fill-opacity=".9"/><rect x="85.7" y="416.55" width="0.9" height="2.0" fill="#282828" fill-opacity=".85"/><rect x="85.7" y="419.50" width="51.2" height="4.0" fill="#000" fill-opacity=".9"/><rect x="85.7" y="420.50" width="50.2" height="2.0" fill="#c0c0c0" fill-opacity=".85"/><rect x="85.7" y="423.44" width="39.1" height="4.0" fill="#000" fill-opacity=".9"/><rect x="85.7" y="424.44" width="38.1" height="2.0" fill="#a0a0a0" fill-opacity=".85"/><rect x="85.7" y="427.39" width="42.9" height="4.0" fill="#000" fill-opacity=".9"/><rect x="85.7" y="428.39" width="41.9" height="2.0" fill="#c0c0c0" fill-opacity=".85"/><rect x="85.7" y="431.33" width="35.3" height="4.0" fill="#000" fill-opacity=".9"/><rect x="85.7" y="432.33" width="34.3" height="2.0" fill="#909090" fill-opacity=".85"/><rect x="85.7" y="435.28" width="35.3" height="4.0" fill="#000" fill-opacity=".9"/><rect x="85.7" y="436.28" width="34.3" height="2.0" fill="#a0a0a0" fill-opacity=".85"/><rect x="85.7" y="439.23" width="42.9" height="4.0" fill="#000" fill-opacity=".9"/><rect x="85.7" y="440.23" width="41.9" height="2.0" fill="#b8b8b8" fill-opacity=".85"/><rect x="85.7" y="443.17" width="42.4" height="4.0" fill="#000" fill-opacity=".9"/><rect x="85.7" y="444.17" width="41.4" height="2.0" fill="#909090" fill-opacity=".85"/><rect x="85.7" y="447.12" width="50.1" height="4.0" fill="#000" fill-opacity=".9"/><rect x="85.7" y="448.12" width="49.1" height="2.0" fill="#b0b0b0" fill-opacity=".85"/><rect x="85.7" y="451.07" width="56.3" height="4.0" fill="#000" fill-opacity=".9"/><rect x="85.7" y="452.07" width="55.3" height="2.0" fill="#484848" fill-opacity=".85"/><rect x="85.7" y="455.01" width="57.2" height="4.0" fill="#000" fill-opacity=".9"/><rect x="85.7" y="456.01" width="56.2" height="2.0" fill="#e8e8e8" fill-opacity=".85"/><rect x="85.7" y="458.96" width="51.5" height="4.0" fill="#000" fill-opacity=".9"/><rect x="85.7" y="459.96" width="50.5" height="2.0" fill="#a0a0a0" fill-opacity=".85"/><rect x="85.7" y="462.91" width="33.3" height="4.0" fill="#000" fill-opacity=".9"/><rect x="85.7" y="463.91" width="32.3" height="2.0" fill="#404040" fill-opacity=".85"/><rect x="85.7" y="466.85" width="34.3" height="4.0" fill="#000" fill-opacity=".9"/><rect x="85.7" y="467.85" width="33.3" height="2.0" fill="#383838" fill-opacity=".85"/><rect x="85.7" y="470.80" width="75.7" height="4.0" fill="#000" fill-opacity=".9"/><rect x="85.7" y="471.80" width="74.7" height="2.0" fill="#f0f0f0" fill-opacity=".85"/><line x1="84.8" y1="476.0" x2="84.8" y2="480.5" stroke="#a8a8a8" stroke-width="1.7"/><text x="84.8" y="494.2" class="ax" text-anchor="middle">0</text><text x="84.8" y="494.2" class="axf" text-anchor="middle">0</text><line x1="123.2" y1="476.0" x2="123.2" y2="480.5" stroke="#a8a8a8" stroke-width="1.7"/><text x="123.2" y="494.2" class="ax" text-anchor="middle">2</text><text x="123.2" y="494.2" class="axf" text-anchor="middle">2</text><line x1="161.6" y1="476.0" x2="161.6" y2="480.5" stroke="#a8a8a8" stroke-width="1.7"/><text x="161.6" y="494.2" class="ax" text-anchor="middle">4</text><text x="161.6" y="494.2" class="axf" text-anchor="middle">4</text><line x1="200.1" y1="476.0" x2="200.1" y2="480.5" stroke="#a8a8a8" stroke-width="1.7"/><text x="200.1" y="494.2" class="ax" text-anchor="middle">6</text><text x="200.1" y="494.2" class="axf" text-anchor="middle">6</text><line x1="238.5" y1="476.0" x2="238.5" y2="480.5" stroke="#a8a8a8" stroke-width="1.7"/><text x="238.5" y="494.2" class="ax" text-anchor="middle">8</text><text x="238.5" y="494.2" class="axf" text-anchor="middle">8</text><line x1="276.9" y1="476.0" x2="276.9" y2="480.5" stroke="#a8a8a8" stroke-width="1.7"/><text x="276.9" y="494.2" class="ax" text-anchor="middle">10</text><text x="276.9" y="494.2" class="axf" text-anchor="middle">10</text><line x1="315.3" y1="476.0" x2="315.3" y2="480.5" stroke="#a8a8a8" stroke-width="1.7"/><text x="315.3" y="494.2" class="ax" text-anchor="middle">12</text><text x="315.3" y="494.2" class="axf" text-anchor="middle">12</text><line x1="353.7" y1="476.0" x2="353.7" y2="480.5" stroke="#a8a8a8" stroke-width="1.7"/><text x="353.7" y="494.2" class="ax" text-anchor="middle">14</text><text x="353.7" y="494.2" class="axf" text-anchor="middle">14</text><text x="229" y="69.4" class="tt" text-anchor="middle" textLength="64" lengthAdjust="spacingAndGlyphs">DeltaE 2000</text><text x="141.3" y="523.2" class="big" textLength="93" lengthAdjust="spacingAndGlyphs" xml:space="preserve">Avg deltaE:  1,6</text><text x="141.3" y="523.2" class="bigf" textLength="93" lengthAdjust="spacingAndGlyphs" xml:space="preserve">Avg deltaE:  1,6</text><rect x="515.3" y="72.0" width="413.7" height="404.0" fill="none" stroke="#000" stroke-opacity=".3" stroke-width="3.4"/><rect x="515.3" y="72.0" width="413.7" height="404.0" fill="none" stroke="#a8a8a8" stroke-width="1.6"/><line x1="515.3" y1="476.0" x2="515.3" y2="480.5" stroke="#a8a8a8" stroke-width="1.7"/><text x="515.3" y="494.7" class="ax" text-anchor="middle">0</text><text x="515.3" y="494.7" class="axf" text-anchor="middle">0</text><line x1="584.2" y1="476.0" x2="584.2" y2="480.5" stroke="#a8a8a8" stroke-width="1.7"/><text x="584.2" y="494.7" class="ax" text-anchor="middle">0,1</text><text x="584.2" y="494.7" class="axf" text-anchor="middle">0,1</text><line x1="653.1" y1="476.0" x2="653.1" y2="480.5" stroke="#a8a8a8" stroke-width="1.7"/><text x="653.1" y="494.7" class="ax" text-anchor="middle">0,2</text><text x="653.1" y="494.7" class="axf" text-anchor="middle">0,2</text><line x1="722.0" y1="476.0" x2="722.0" y2="480.5" stroke="#a8a8a8" stroke-width="1.7"/><text x="722.0" y="494.7" class="ax" text-anchor="middle">0,3</text><text x="722.0" y="494.7" class="axf" text-anchor="middle">0,3</text><line x1="790.9" y1="476.0" x2="790.9" y2="480.5" stroke="#a8a8a8" stroke-width="1.7"/><text x="790.9" y="494.7" class="ax" text-anchor="middle">0,4</text><text x="790.9" y="494.7" class="axf" text-anchor="middle">0,4</text><line x1="859.8" y1="476.0" x2="859.8" y2="480.5" stroke="#a8a8a8" stroke-width="1.7"/><text x="859.8" y="494.7" class="ax" text-anchor="middle">0,5</text><text x="859.8" y="494.7" class="axf" text-anchor="middle">0,5</text><line x1="510.8" y1="475.7" x2="515.3" y2="475.7" stroke="#a8a8a8" stroke-width="1.7"/><text x="509.5" y="481.7" class="ax" text-anchor="end">0</text><text x="509.5" y="481.7" class="axf" text-anchor="end">0</text><line x1="510.8" y1="442.0" x2="515.3" y2="442.0" stroke="#a8a8a8" stroke-width="1.7"/><text x="509.5" y="448.0" class="ax" text-anchor="end">0,05</text><text x="509.5" y="448.0" class="axf" text-anchor="end">0,05</text><line x1="510.8" y1="408.3" x2="515.3" y2="408.3" stroke="#a8a8a8" stroke-width="1.7"/><text x="509.5" y="414.3" class="ax" text-anchor="end">0,1</text><text x="509.5" y="414.3" class="axf" text-anchor="end">0,1</text><line x1="510.8" y1="374.7" x2="515.3" y2="374.7" stroke="#a8a8a8" stroke-width="1.7"/><text x="509.5" y="380.7" class="ax" text-anchor="end">0,15</text><text x="509.5" y="380.7" class="axf" text-anchor="end">0,15</text><line x1="510.8" y1="341.0" x2="515.3" y2="341.0" stroke="#a8a8a8" stroke-width="1.7"/><text x="509.5" y="347.0" class="ax" text-anchor="end">0,2</text><text x="509.5" y="347.0" class="axf" text-anchor="end">0,2</text><line x1="510.8" y1="307.3" x2="515.3" y2="307.3" stroke="#a8a8a8" stroke-width="1.7"/><text x="509.5" y="313.3" class="ax" text-anchor="end">0,25</text><text x="509.5" y="313.3" class="axf" text-anchor="end">0,25</text><line x1="510.8" y1="273.6" x2="515.3" y2="273.6" stroke="#a8a8a8" stroke-width="1.7"/><text x="509.5" y="279.6" class="ax" text-anchor="end">0,3</text><text x="509.5" y="279.6" class="axf" text-anchor="end">0,3</text><line x1="510.8" y1="240.0" x2="515.3" y2="240.0" stroke="#a8a8a8" stroke-width="1.7"/><text x="509.5" y="246.0" class="ax" text-anchor="end">0,35</text><text x="509.5" y="246.0" class="axf" text-anchor="end">0,35</text><line x1="510.8" y1="206.3" x2="515.3" y2="206.3" stroke="#a8a8a8" stroke-width="1.7"/><text x="509.5" y="212.3" class="ax" text-anchor="end">0,4</text><text x="509.5" y="212.3" class="axf" text-anchor="end">0,4</text><line x1="510.8" y1="172.6" x2="515.3" y2="172.6" stroke="#a8a8a8" stroke-width="1.7"/><text x="509.5" y="178.6" class="ax" text-anchor="end">0,45</text><text x="509.5" y="178.6" class="axf" text-anchor="end">0,45</text><line x1="510.8" y1="138.9" x2="515.3" y2="138.9" stroke="#a8a8a8" stroke-width="1.7"/><text x="509.5" y="144.9" class="ax" text-anchor="end">0,5</text><text x="509.5" y="144.9" class="axf" text-anchor="end">0,5</text><line x1="510.8" y1="105.3" x2="515.3" y2="105.3" stroke="#a8a8a8" stroke-width="1.7"/><text x="509.5" y="111.3" class="ax" text-anchor="end">0,55</text><text x="509.5" y="111.3" class="axf" text-anchor="end">0,55</text><text x="708" y="67.9" class="tt" style="font-size:11.3px" text-anchor="middle" textLength="68.5" lengthAdjust="spacingAndGlyphs">CIE 1976 u'v'</text><text x="556.2" y="519.5" class="big" textLength="194" lengthAdjust="spacingAndGlyphs">UHDA-P3 Percent 1976 uv: 98,39</text><text x="556.2" y="519.5" class="bigf" textLength="194" lengthAdjust="spacingAndGlyphs">UHDA-P3 Percent 1976 uv: 98,39</text><rect x="576.7" y="80.7" width="11.4" height="11.4" fill="none" stroke="#000" stroke-opacity=".3" stroke-width="2.8"/><rect x="576.7" y="80.7" width="11.4" height="11.4" fill="none" stroke="#fff" stroke-opacity=".9" stroke-width="1.4"/><circle cx="580.8" cy="88.0" r="3.8" fill="#20d020" stroke="#000" stroke-width="1.1"/><rect x="650.8" y="89.5" width="11.4" height="11.4" fill="none" stroke="#000" stroke-opacity=".3" stroke-width="2.8"/><rect x="650.8" y="89.5" width="11.4" height="11.4" fill="none" stroke="#fff" stroke-opacity=".9" stroke-width="1.4"/><circle cx="656.5" cy="97.3" r="3.6" fill="#e8e020" stroke="#000" stroke-width="1.1"/><rect x="592.5" y="164.5" width="11.4" height="11.4" fill="none" stroke="#000" stroke-opacity=".3" stroke-width="2.8"/><rect x="592.5" y="164.5" width="11.4" height="11.4" fill="none" stroke="#fff" stroke-opacity=".9" stroke-width="1.4"/><circle cx="596.0" cy="170.9" r="3.7" fill="#30e0e0" stroke="#000" stroke-width="1.1"/><rect x="645.5" y="154.3" width="11.4" height="11.4" fill="none" stroke="#000" stroke-opacity=".9" stroke-width="1.4"/><circle cx="652.3" cy="162.0" r="3.8" fill="#ffffff" stroke="#000" stroke-width="1.1"/><rect x="850.8" y="116.8" width="11.4" height="11.4" fill="none" stroke="#000" stroke-opacity=".3" stroke-width="2.8"/><rect x="850.8" y="116.8" width="11.4" height="11.4" fill="none" stroke="#fff" stroke-opacity=".9" stroke-width="1.4"/><circle cx="852.6" cy="122.2" r="2.4" fill="#e02030" stroke="#000" stroke-width="1.1"/><rect x="732.7" y="248.2" width="11.4" height="11.4" fill="none" stroke="#000" stroke-opacity=".3" stroke-width="2.8"/><rect x="732.7" y="248.2" width="11.4" height="11.4" fill="none" stroke="#fff" stroke-opacity=".9" stroke-width="1.4"/><circle cx="740.4" cy="253.6" r="2.6" fill="#c020d0" stroke="#000" stroke-width="1.1"/><rect x="630.5" y="362.9" width="11.4" height="11.4" fill="none" stroke="#000" stroke-opacity=".3" stroke-width="2.8"/><rect x="630.5" y="362.9" width="11.4" height="11.4" fill="none" stroke="#fff" stroke-opacity=".9" stroke-width="1.4"/><circle cx="632.8" cy="373.6" r="2.1" fill="#3838ff"/></svg></div></body></html>
